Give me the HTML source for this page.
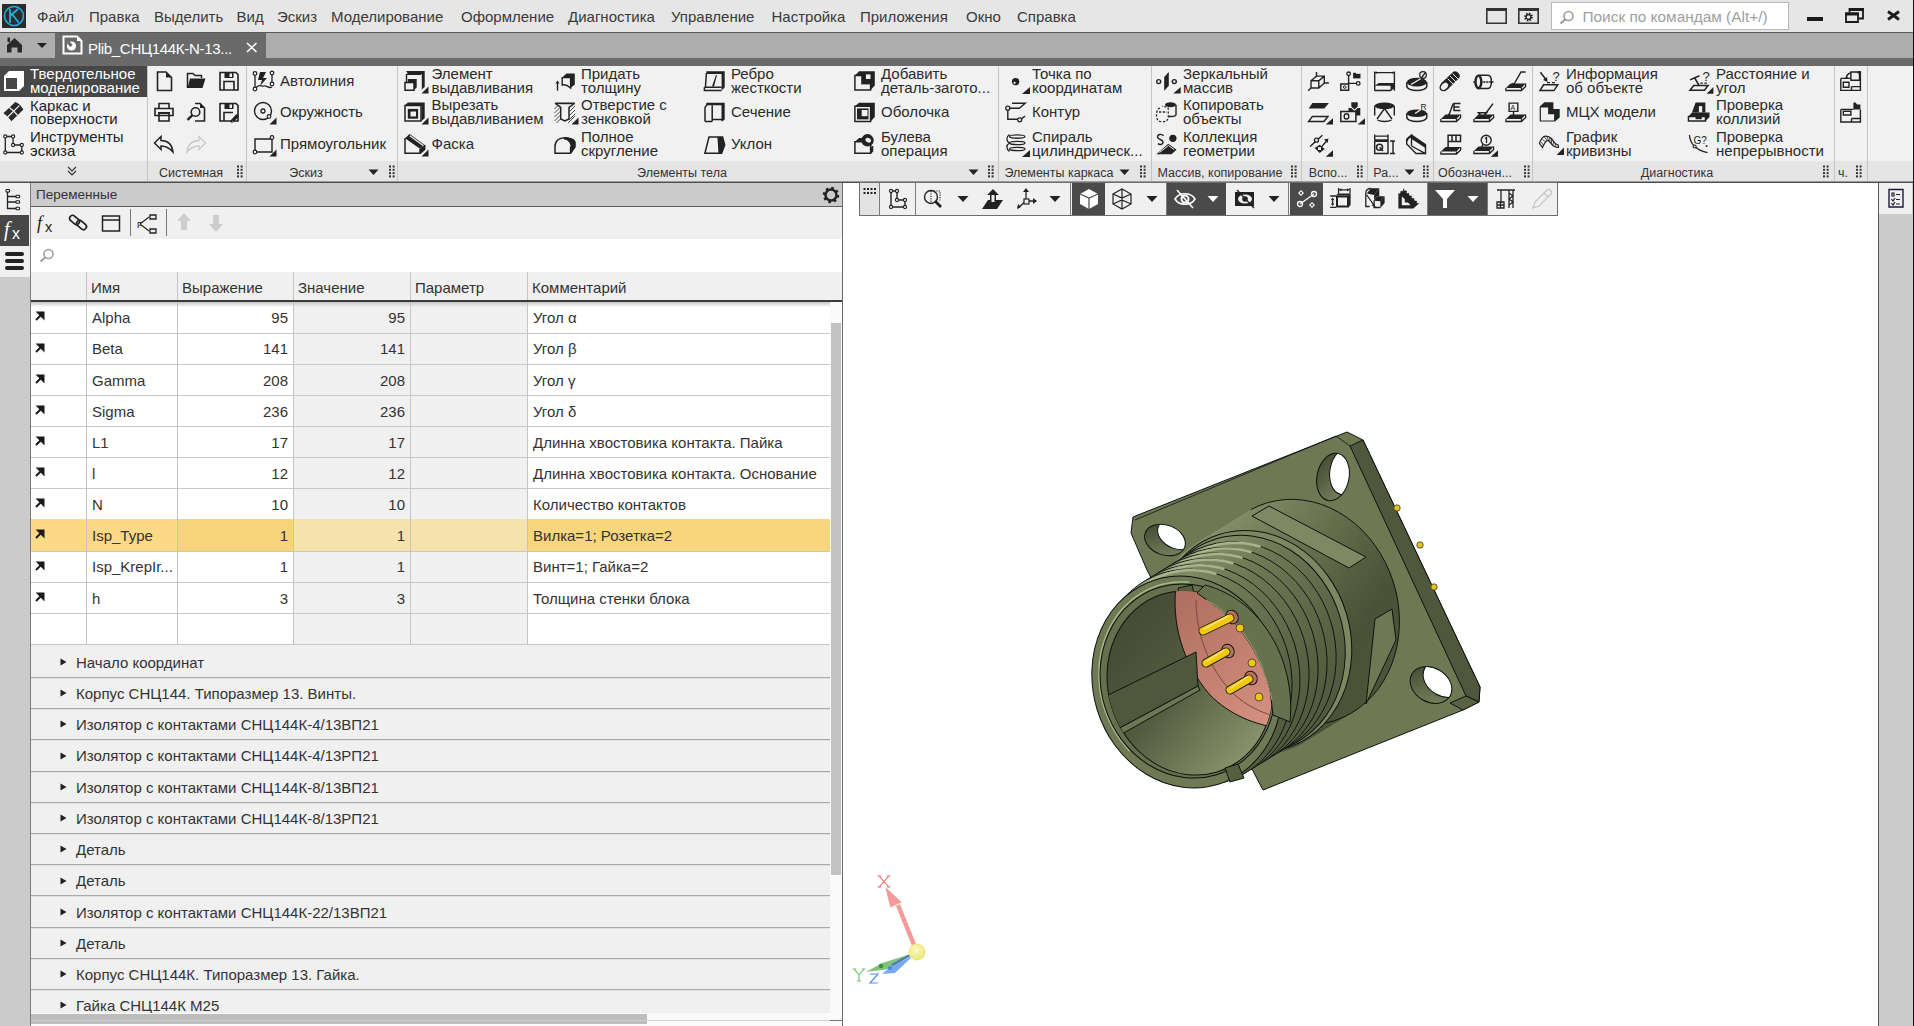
<!DOCTYPE html><html><head><meta charset="utf-8"><style>
html,body{margin:0;padding:0;width:1914px;height:1026px;overflow:hidden;background:#fff;}
.t{position:absolute;white-space:nowrap;font-family:"Liberation Sans", sans-serif;}
svg{overflow:visible}
</style></head><body>
<div style="position:absolute;left:0px;top:0px;width:1914px;height:32px;background:#e6e6e6;"></div>
<svg style="position:absolute;left:2px;top:4px;" width="24" height="24" viewBox="0 0 24 24"><rect x="0" y="0" width="24" height="24" fill="#2b2b2b"/><circle cx="12" cy="12" r="9.5" fill="none" stroke="#1ab0e8" stroke-width="1.6"/><path d="M8 5 V19 M8 12 L16 5 M10 10 L17 19" fill="none" stroke="#1ab0e8" stroke-width="1.8"/></svg>
<div class="t" style="left:37px;top:9.30px;font-size:15px;line-height:15px;color:#3a3a3a;">Файл</div>
<div class="t" style="left:89px;top:9.30px;font-size:15px;line-height:15px;color:#3a3a3a;">Правка</div>
<div class="t" style="left:154px;top:9.30px;font-size:15px;line-height:15px;color:#3a3a3a;">Выделить</div>
<div class="t" style="left:236.5px;top:9.30px;font-size:15px;line-height:15px;color:#3a3a3a;">Вид</div>
<div class="t" style="left:277px;top:9.30px;font-size:15px;line-height:15px;color:#3a3a3a;">Эскиз</div>
<div class="t" style="left:331px;top:9.30px;font-size:15px;line-height:15px;color:#3a3a3a;">Моделирование</div>
<div class="t" style="left:461px;top:9.30px;font-size:15px;line-height:15px;color:#3a3a3a;">Оформление</div>
<div class="t" style="left:568px;top:9.30px;font-size:15px;line-height:15px;color:#3a3a3a;">Диагностика</div>
<div class="t" style="left:671px;top:9.30px;font-size:15px;line-height:15px;color:#3a3a3a;">Управление</div>
<div class="t" style="left:771.5px;top:9.30px;font-size:15px;line-height:15px;color:#3a3a3a;">Настройка</div>
<div class="t" style="left:860px;top:9.30px;font-size:15px;line-height:15px;color:#3a3a3a;">Приложения</div>
<div class="t" style="left:966px;top:9.30px;font-size:15px;line-height:15px;color:#3a3a3a;">Окно</div>
<div class="t" style="left:1017px;top:9.30px;font-size:15px;line-height:15px;color:#3a3a3a;">Справка</div>
<svg style="position:absolute;left:1486px;top:8px;" width="21" height="16" viewBox="0 0 21 16"><path d="M0.8 0.8 H20.2 V15.2 H0.8 Z" fill="none" stroke="#333" stroke-width="1.6" /><path d="M0 0 H21 V3 H0 Z" fill="#333"/></svg>
<svg style="position:absolute;left:1518px;top:8px;" width="21" height="16" viewBox="0 0 21 16"><path d="M0.8 0.8 H20.2 V15.2 H0.8 Z" fill="none" stroke="#333" stroke-width="1.6" /><path d="M0 0 H21 V3 H0 Z" fill="#333"/><circle cx="10.5" cy="9" r="3.2" fill="none" stroke="#222" stroke-width="2.4" stroke-dasharray="1.4 1.1"/><circle cx="10.5" cy="9" r="2.4" fill="none" stroke="#222" stroke-width="1.2"/></svg>
<div style="position:absolute;left:1551px;top:2px;width:238px;height:28px;background:#fff;box-sizing:border-box;border:1px solid #b8b8b8;"></div>
<svg style="position:absolute;left:1559px;top:10px;" width="16" height="14" viewBox="0 0 16 14"><circle cx="9.5" cy="6" r="4.5" fill="none" stroke="#9a9a9a" stroke-width="1.6"/><path d="M6.2 9.5 L1.5 13.5" stroke="#9a9a9a" stroke-width="2.2"/></svg>
<div class="t" style="left:1582.5px;top:9.46px;font-size:15.4px;line-height:15.4px;color:#a0a0a0;">Поиск по командам (Alt+/)</div>
<div style="position:absolute;left:1807px;top:17px;width:16px;height:3.5px;background:#1a1a1a;"></div>
<svg style="position:absolute;left:1845px;top:8px;" width="19" height="15" viewBox="0 0 19 15"><path d="M1 5.5 H13 V14 H1 Z" fill="none" stroke="#1a1a1a" stroke-width="1.8" /><path d="M0 4.5 H14 V7.5 H0 Z" fill="#1a1a1a"/><path d="M4.5 4.5 V1 H18 V10.5 H13.5" fill="none" stroke="#1a1a1a" stroke-width="1.8" /><path d="M4 0 H19 V3 H4 Z" fill="#1a1a1a"/></svg>
<svg style="position:absolute;left:1886px;top:10px;" width="15" height="11" viewBox="0 0 15 11"><path d="M2 1.5 L13 9.5 M13 1.5 L2 9.5" stroke="#1a1a1a" stroke-width="2.8"/></svg>
<div style="position:absolute;left:0px;top:32px;width:1914px;height:34px;background:#6a6a6a;"></div>
<div style="position:absolute;left:0px;top:32px;width:1914px;height:1px;background:#5a5a5a;"></div>
<div style="position:absolute;left:0px;top:33px;width:55px;height:25px;background:#adadad;"></div>
<div style="position:absolute;left:266px;top:33px;width:1648px;height:25px;background:#adadad;"></div>
<svg style="position:absolute;left:6px;top:37px;" width="17" height="17" viewBox="0 0 17 17"><path d="M1 8 L8.5 1 L16 8 V15.5 H11.5 V10.5 H5.5 V15.5 H1 Z" fill="#2a2a2a"/><path d="M1.5 0.5 H4 V5 H1.5 Z" fill="#2a2a2a"/></svg>
<svg style="position:absolute;left:36px;top:42px;" width="12" height="8" viewBox="0 0 12 8"><path d="M1 1 L11 1 L6 6 Z" fill="#222"/></svg>
<svg style="position:absolute;left:62px;top:35px;" width="21" height="20" viewBox="0 0 21 20"><path d="M1.5 1.5 H15 L19.5 6 V18.5 H1.5 Z" fill="none" stroke="#fff" stroke-width="2" /><circle cx="9.5" cy="11" r="4.6" fill="#fff"/><path d="M9.5 11 L6.5 7.5" stroke="#6a6a6a" stroke-width="3"/><path d="M15 1.5 L19.5 6 H15 Z" fill="#fff"/></svg>
<div class="t" style="left:88px;top:41.30px;font-size:15px;line-height:15px;color:#ffffff;letter-spacing:-0.3px">Plib_СНЦ144К-N-13...</div>
<svg style="position:absolute;left:245.5px;top:42px;" width="12" height="11" viewBox="0 0 12 11"><path d="M1 1 L10.5 10 M10.5 1 L1 10" stroke="#fff" stroke-width="1.6"/></svg>
<div style="position:absolute;left:0px;top:66px;width:1914px;height:116px;background:#f1f1f1;"></div>
<div style="position:absolute;left:0px;top:161px;width:1914px;height:21px;background:#e5e5e5;"></div>
<div style="position:absolute;left:0px;top:181px;width:1914px;height:1px;background:#9a9a9a;"></div>
<div style="position:absolute;left:0px;top:182px;width:1914px;height:1px;background:#4e4e4e;"></div>
<div style="position:absolute;left:147px;top:66px;width:1px;height:115px;background:#c4c4c4;"></div>
<div style="position:absolute;left:246px;top:66px;width:1px;height:115px;background:#c4c4c4;"></div>
<div style="position:absolute;left:397px;top:66px;width:1px;height:115px;background:#c4c4c4;"></div>
<div style="position:absolute;left:998px;top:66px;width:1px;height:115px;background:#c4c4c4;"></div>
<div style="position:absolute;left:1151px;top:66px;width:1px;height:115px;background:#c4c4c4;"></div>
<div style="position:absolute;left:1301px;top:66px;width:1px;height:115px;background:#c4c4c4;"></div>
<div style="position:absolute;left:1367px;top:66px;width:1px;height:115px;background:#c4c4c4;"></div>
<div style="position:absolute;left:1433px;top:66px;width:1px;height:115px;background:#c4c4c4;"></div>
<div style="position:absolute;left:1532px;top:66px;width:1px;height:115px;background:#c4c4c4;"></div>
<div style="position:absolute;left:1834px;top:66px;width:1px;height:115px;background:#c4c4c4;"></div>
<div style="position:absolute;left:1867px;top:66px;width:1px;height:115px;background:#c4c4c4;"></div>
<div style="position:absolute;left:0px;top:66px;width:147px;height:31px;background:#474747;"></div>
<svg style="position:absolute;left:3px;top:70px;" width="22" height="22" viewBox="0 0 22 22"><path d="M1 6 L6 1 H21 V16 L16 21 H1 Z" fill="#ffffff"/><path d="M3 8 H14 V19 H3 Z" fill="#474747"/></svg>
<div class="t" style="left:30px;top:66.10px;font-size:15px;line-height:15px;color:#ffffff;">Твердотельное</div>
<div class="t" style="left:30px;top:79.70px;font-size:15px;line-height:15px;color:#ffffff;">моделирование</div>
<svg style="position:absolute;left:3px;top:101px;" width="22" height="22" viewBox="0 0 22 22"><path d="M0.4 12.2 L12.3 0.9 C15 2 18 4 20.4 8.4 L8.5 20.3 C6 17 3.5 14 0.4 12.2 Z" fill="#2a2a2a"/><path d="M6.3 6.5 C9 8.5 12 11 14.5 14.3 M16.3 4.6 L4.5 16.2" fill="none" stroke="#f1f1f1" stroke-width="1.3" /></svg>
<div class="t" style="left:30px;top:97.80px;font-size:15px;line-height:15px;color:#222;">Каркас и</div>
<div class="t" style="left:30px;top:111.10px;font-size:15px;line-height:15px;color:#222;">поверхности</div>
<svg style="position:absolute;left:3px;top:132px;" width="22" height="24" viewBox="0 0 22 24"><path d="M2.3 4.5 H10.1 V13 H18.8 V20.5 H2.3 Z" fill="none" stroke="#222" stroke-width="1.3" /><circle cx="2.3" cy="4.5" r="1.6" fill="#f1f1f1" stroke="#222" stroke-width="1.1"/><circle cx="10.1" cy="4.5" r="1.6" fill="#f1f1f1" stroke="#222" stroke-width="1.1"/><circle cx="10.1" cy="13" r="1.6" fill="#f1f1f1" stroke="#222" stroke-width="1.1"/><circle cx="18.8" cy="13" r="1.6" fill="#f1f1f1" stroke="#222" stroke-width="1.1"/><circle cx="18.8" cy="20.5" r="1.6" fill="#f1f1f1" stroke="#222" stroke-width="1.1"/><circle cx="2.3" cy="20.5" r="1.6" fill="#f1f1f1" stroke="#222" stroke-width="1.1"/></svg>
<div class="t" style="left:30px;top:129.30px;font-size:15px;line-height:15px;color:#222;">Инструменты</div>
<div class="t" style="left:30px;top:142.80px;font-size:15px;line-height:15px;color:#222;">эскиза</div>
<svg style="position:absolute;left:66px;top:165px;" width="12" height="12" viewBox="0 0 12 12"><path d="M2 2 L6 6 L10 2 M2 6 L6 10 L10 6" stroke="#333" stroke-width="1.2" fill="none"/></svg>
<div class="t" style="left:-109px;width:600px;text-align:center;top:166.92px;font-size:12.5px;line-height:12.5px;color:#333;">Системная</div>
<svg style="position:absolute;left:237px;top:165px;" width="6" height="12" viewBox="0 0 6 12"><rect x="0" y="0.5" width="2" height="2" fill="#333"/><rect x="0" y="3.8" width="2" height="2" fill="#333"/><rect x="0" y="7.1" width="2" height="2" fill="#333"/><rect x="0" y="10.4" width="2" height="2" fill="#333"/><rect x="3.6" y="0.5" width="2" height="2" fill="#333"/><rect x="3.6" y="3.8" width="2" height="2" fill="#333"/><rect x="3.6" y="7.1" width="2" height="2" fill="#333"/><rect x="3.6" y="10.4" width="2" height="2" fill="#333"/></svg>
<div class="t" style="left:6px;width:600px;text-align:center;top:166.92px;font-size:12.5px;line-height:12.5px;color:#333;">Эскиз</div>
<svg style="position:absolute;left:389px;top:165px;" width="6" height="12" viewBox="0 0 6 12"><rect x="0" y="0.5" width="2" height="2" fill="#333"/><rect x="0" y="3.8" width="2" height="2" fill="#333"/><rect x="0" y="7.1" width="2" height="2" fill="#333"/><rect x="0" y="10.4" width="2" height="2" fill="#333"/><rect x="3.6" y="0.5" width="2" height="2" fill="#333"/><rect x="3.6" y="3.8" width="2" height="2" fill="#333"/><rect x="3.6" y="7.1" width="2" height="2" fill="#333"/><rect x="3.6" y="10.4" width="2" height="2" fill="#333"/></svg>
<svg style="position:absolute;left:368px;top:168.5px;" width="11" height="7" viewBox="0 0 11 7"><path d="M0.5 0.5 L10.5 0.5 L5.5 6 Z" fill="#222"/></svg>
<div class="t" style="left:382px;width:600px;text-align:center;top:166.92px;font-size:12.5px;line-height:12.5px;color:#333;">Элементы тела</div>
<svg style="position:absolute;left:988px;top:165px;" width="6" height="12" viewBox="0 0 6 12"><rect x="0" y="0.5" width="2" height="2" fill="#333"/><rect x="0" y="3.8" width="2" height="2" fill="#333"/><rect x="0" y="7.1" width="2" height="2" fill="#333"/><rect x="0" y="10.4" width="2" height="2" fill="#333"/><rect x="3.6" y="0.5" width="2" height="2" fill="#333"/><rect x="3.6" y="3.8" width="2" height="2" fill="#333"/><rect x="3.6" y="7.1" width="2" height="2" fill="#333"/><rect x="3.6" y="10.4" width="2" height="2" fill="#333"/></svg>
<svg style="position:absolute;left:968px;top:168.5px;" width="11" height="7" viewBox="0 0 11 7"><path d="M0.5 0.5 L10.5 0.5 L5.5 6 Z" fill="#222"/></svg>
<div class="t" style="left:759px;width:600px;text-align:center;top:166.92px;font-size:12.5px;line-height:12.5px;color:#333;">Элементы каркаса</div>
<svg style="position:absolute;left:1140px;top:165px;" width="6" height="12" viewBox="0 0 6 12"><rect x="0" y="0.5" width="2" height="2" fill="#333"/><rect x="0" y="3.8" width="2" height="2" fill="#333"/><rect x="0" y="7.1" width="2" height="2" fill="#333"/><rect x="0" y="10.4" width="2" height="2" fill="#333"/><rect x="3.6" y="0.5" width="2" height="2" fill="#333"/><rect x="3.6" y="3.8" width="2" height="2" fill="#333"/><rect x="3.6" y="7.1" width="2" height="2" fill="#333"/><rect x="3.6" y="10.4" width="2" height="2" fill="#333"/></svg>
<svg style="position:absolute;left:1119px;top:168.5px;" width="11" height="7" viewBox="0 0 11 7"><path d="M0.5 0.5 L10.5 0.5 L5.5 6 Z" fill="#222"/></svg>
<div class="t" style="left:920px;width:600px;text-align:center;top:166.92px;font-size:12.5px;line-height:12.5px;color:#333;">Массив, копирование</div>
<svg style="position:absolute;left:1291px;top:165px;" width="6" height="12" viewBox="0 0 6 12"><rect x="0" y="0.5" width="2" height="2" fill="#333"/><rect x="0" y="3.8" width="2" height="2" fill="#333"/><rect x="0" y="7.1" width="2" height="2" fill="#333"/><rect x="0" y="10.4" width="2" height="2" fill="#333"/><rect x="3.6" y="0.5" width="2" height="2" fill="#333"/><rect x="3.6" y="3.8" width="2" height="2" fill="#333"/><rect x="3.6" y="7.1" width="2" height="2" fill="#333"/><rect x="3.6" y="10.4" width="2" height="2" fill="#333"/></svg>
<div class="t" style="left:1028px;width:600px;text-align:center;top:166.92px;font-size:12.5px;line-height:12.5px;color:#333;">Вспо...</div>
<svg style="position:absolute;left:1357px;top:165px;" width="6" height="12" viewBox="0 0 6 12"><rect x="0" y="0.5" width="2" height="2" fill="#333"/><rect x="0" y="3.8" width="2" height="2" fill="#333"/><rect x="0" y="7.1" width="2" height="2" fill="#333"/><rect x="0" y="10.4" width="2" height="2" fill="#333"/><rect x="3.6" y="0.5" width="2" height="2" fill="#333"/><rect x="3.6" y="3.8" width="2" height="2" fill="#333"/><rect x="3.6" y="7.1" width="2" height="2" fill="#333"/><rect x="3.6" y="10.4" width="2" height="2" fill="#333"/></svg>
<div class="t" style="left:1086px;width:600px;text-align:center;top:166.92px;font-size:12.5px;line-height:12.5px;color:#333;">Ра...</div>
<svg style="position:absolute;left:1423px;top:165px;" width="6" height="12" viewBox="0 0 6 12"><rect x="0" y="0.5" width="2" height="2" fill="#333"/><rect x="0" y="3.8" width="2" height="2" fill="#333"/><rect x="0" y="7.1" width="2" height="2" fill="#333"/><rect x="0" y="10.4" width="2" height="2" fill="#333"/><rect x="3.6" y="0.5" width="2" height="2" fill="#333"/><rect x="3.6" y="3.8" width="2" height="2" fill="#333"/><rect x="3.6" y="7.1" width="2" height="2" fill="#333"/><rect x="3.6" y="10.4" width="2" height="2" fill="#333"/></svg>
<svg style="position:absolute;left:1404px;top:168.5px;" width="11" height="7" viewBox="0 0 11 7"><path d="M0.5 0.5 L10.5 0.5 L5.5 6 Z" fill="#222"/></svg>
<div class="t" style="left:1175px;width:600px;text-align:center;top:166.92px;font-size:12.5px;line-height:12.5px;color:#333;">Обозначен...</div>
<svg style="position:absolute;left:1524px;top:165px;" width="6" height="12" viewBox="0 0 6 12"><rect x="0" y="0.5" width="2" height="2" fill="#333"/><rect x="0" y="3.8" width="2" height="2" fill="#333"/><rect x="0" y="7.1" width="2" height="2" fill="#333"/><rect x="0" y="10.4" width="2" height="2" fill="#333"/><rect x="3.6" y="0.5" width="2" height="2" fill="#333"/><rect x="3.6" y="3.8" width="2" height="2" fill="#333"/><rect x="3.6" y="7.1" width="2" height="2" fill="#333"/><rect x="3.6" y="10.4" width="2" height="2" fill="#333"/></svg>
<div class="t" style="left:1377px;width:600px;text-align:center;top:166.92px;font-size:12.5px;line-height:12.5px;color:#333;">Диагностика</div>
<svg style="position:absolute;left:1823px;top:165px;" width="6" height="12" viewBox="0 0 6 12"><rect x="0" y="0.5" width="2" height="2" fill="#333"/><rect x="0" y="3.8" width="2" height="2" fill="#333"/><rect x="0" y="7.1" width="2" height="2" fill="#333"/><rect x="0" y="10.4" width="2" height="2" fill="#333"/><rect x="3.6" y="0.5" width="2" height="2" fill="#333"/><rect x="3.6" y="3.8" width="2" height="2" fill="#333"/><rect x="3.6" y="7.1" width="2" height="2" fill="#333"/><rect x="3.6" y="10.4" width="2" height="2" fill="#333"/></svg>
<div class="t" style="left:1543px;width:600px;text-align:center;top:166.92px;font-size:12.5px;line-height:12.5px;color:#333;">ч.</div>
<svg style="position:absolute;left:1856px;top:165px;" width="6" height="12" viewBox="0 0 6 12"><rect x="0" y="0.5" width="2" height="2" fill="#333"/><rect x="0" y="3.8" width="2" height="2" fill="#333"/><rect x="0" y="7.1" width="2" height="2" fill="#333"/><rect x="0" y="10.4" width="2" height="2" fill="#333"/><rect x="3.6" y="0.5" width="2" height="2" fill="#333"/><rect x="3.6" y="3.8" width="2" height="2" fill="#333"/><rect x="3.6" y="7.1" width="2" height="2" fill="#333"/><rect x="3.6" y="10.4" width="2" height="2" fill="#333"/></svg>
<svg style="position:absolute;left:152px;top:69px;" width="24" height="24" viewBox="0 0 24 24"><path d="M5.5 3 H14 L19.5 8.5 V21.5 H5.5 Z" fill="none" stroke="#222" stroke-width="1.6" /><path d="M14 3 L19.5 8.5 H14 Z" fill="#222"/></svg>
<svg style="position:absolute;left:184px;top:69px;" width="24" height="24" viewBox="0 0 24 24"><path d="M3.5 19 V4.5 H9 L11 6.5 H17.5 V9" fill="none" stroke="#222" stroke-width="1.5" /><path d="M3.5 19 L6 9.5 H21.5 L18.5 19 Z" fill="#222"/></svg>
<svg style="position:absolute;left:217px;top:69px;" width="24" height="24" viewBox="0 0 24 24"><path d="M3 3.5 H19 L21 5.5 V21 H3 Z M7 21 V12.5 H17 V21" fill="none" stroke="#222" stroke-width="1.6" /><path d="M7.5 3.5 H16.5 V9 H7.5 Z" fill="#222"/><rect x="12.5" y="4.5" width="2.5" height="3.5" fill="#f1f1f1"/></svg>
<svg style="position:absolute;left:152px;top:100px;" width="24" height="24" viewBox="0 0 24 24"><path d="M7 3.5 H17 V8.5 H7 Z M3 8.5 H21 V15.5 H3 Z M7 13 H17 V21 H7 Z" fill="none" stroke="#222" stroke-width="1.6" /><path d="M6 12 H18 V14 H6 Z" fill="#222"/></svg>
<svg style="position:absolute;left:184px;top:100px;" width="24" height="24" viewBox="0 0 24 24"><path d="M11 3.5 H16 L20.5 8 V21 H11" fill="none" stroke="#222" stroke-width="1.6" /><path d="M16 3.5 L20.5 8 H16 Z" fill="#222"/><circle cx="11.5" cy="12" r="4.3" fill="#f1f1f1" stroke="#222" stroke-width="1.6"/><path d="M8.5 15 L3.5 20" fill="none" stroke="#222" stroke-width="2.4" /></svg>
<svg style="position:absolute;left:217px;top:100px;" width="24" height="24" viewBox="0 0 24 24"><path d="M3 3.5 H19 L21 5.5 V21 H3 Z M7 21 V12.5 H16" fill="none" stroke="#222" stroke-width="1.6" /><path d="M7.5 3.5 H16.5 V9 H7.5 Z" fill="#222"/><rect x="12.5" y="4.5" width="2.5" height="3.5" fill="#f1f1f1"/><path d="M13.5 20.5 L19.5 14 L22 16.5 L16 22.5 H13.5 Z" fill="#222"/><path d="M15 20.5 L16 21.5 L15 21.5 Z" fill="#f1f1f1"/></svg>
<svg style="position:absolute;left:152px;top:132px;" width="24" height="24" viewBox="0 0 24 24"><path d="M2.5 11 L9 4.5 V8.5 C15 8.5 20 12 21 20 C17 15.5 13.5 14 9 14 V17.5 Z" fill="none" stroke="#222" stroke-width="1.5" /></svg>
<svg style="position:absolute;left:184px;top:132px;" width="24" height="24" viewBox="0 0 24 24"><path d="M21.5 11 L15 4.5 V8.5 C9 8.5 4 12 3 20 C7 15.5 10.5 14 15 14 V17.5 Z" fill="none" stroke="#c9c9c9" stroke-width="1.3" /></svg>
<svg style="position:absolute;left:252px;top:69px;" width="24" height="24" viewBox="0 0 24 24"><path d="M3 5 V20 M3 20 C7 14 9 18 12 17 C15 16 16 20 20 18 M20 5 V15" fill="none" stroke="#222" stroke-width="1.3" /><path d="M8 3 H14 L11 9 H15 L8 17 L10 11 H6 Z" fill="#222"/><circle cx="3" cy="4.5" r="1.8" fill="#f1f1f1" stroke="#222" stroke-width="1.2"/><circle cx="20" cy="4" r="1.8" fill="#f1f1f1" stroke="#222" stroke-width="1.2"/><circle cx="20" cy="15" r="1.8" fill="#f1f1f1" stroke="#222" stroke-width="1.2"/><circle cx="3" cy="20" r="1.8" fill="#f1f1f1" stroke="#222" stroke-width="1.2"/></svg>
<div class="t" style="left:280px;top:73.10px;font-size:15px;line-height:15px;color:#2a2a2a;">Автолиния</div>
<svg style="position:absolute;left:252px;top:100px;" width="24" height="24" viewBox="0 0 24 24"><circle cx="11" cy="11" r="8.5" fill="none" stroke="#222" stroke-width="1.4"/><circle cx="11" cy="11" r="2" fill="none" stroke="#222" stroke-width="1.3"/><circle cx="17" cy="16.5" r="1.8" fill="#f1f1f1" stroke="#222" stroke-width="1.2"/><path d="M17.5 24.5 L24.5 17.5 V24.5 Z" fill="#222"/></svg>
<div class="t" style="left:280px;top:104.10px;font-size:15px;line-height:15px;color:#2a2a2a;">Окружность</div>
<svg style="position:absolute;left:252px;top:132px;" width="24" height="24" viewBox="0 0 24 24"><path d="M3 7 H20 V20 H3 Z" fill="none" stroke="#222" stroke-width="1.4" /><circle cx="20" cy="5.5" r="1.8" fill="#f1f1f1" stroke="#222" stroke-width="1.2"/><circle cx="3" cy="20" r="1.8" fill="#f1f1f1" stroke="#222" stroke-width="1.2"/><path d="M17.5 24.5 L24.5 17.5 V24.5 Z" fill="#222"/></svg>
<div class="t" style="left:280px;top:136.10px;font-size:15px;line-height:15px;color:#2a2a2a;">Прямоугольник</div>
<svg style="position:absolute;left:404px;top:69px;" width="24" height="24" viewBox="0 0 24 24"><path d="M2.5 13 V5 M2.5 5.2 H17" fill="none" stroke="#222" stroke-width="1.4" /><path d="M2 2 H20.7 V18 L17.8 20.5 V5.3 H4.5 Z" fill="#222"/><path d="M3.8 10 H12.7 V18.5 L10 21 V13.2 H3.8 Z" fill="#222"/><path d="M1 13.5 H10 V21.2 H1 Z" fill="none" stroke="#222" stroke-width="1.5" /><path d="M17.5 24.5 L24.5 17.5 V24.5 Z" fill="#222"/></svg>
<div class="t" style="left:431.5px;top:66.00px;font-size:15px;line-height:15px;color:#2a2a2a;">Элемент</div>
<div class="t" style="left:431.5px;top:80.10px;font-size:15px;line-height:15px;color:#2a2a2a;">выдавливания</div>
<svg style="position:absolute;left:404px;top:100px;" width="24" height="24" viewBox="0 0 24 24"><path d="M1 5.2 L3.8 2.4 H20.7 V18.3 L17.5 21 V5.2 Z" fill="#222"/><path d="M1 5.5 H17 V21 H1 Z" fill="none" stroke="#222" stroke-width="1.5" /><path d="M3.8 8.9 H14.1 V18.7 H3.8 Z" fill="#222"/><path d="M6.5 11.5 H12 V16.5 H6.5 Z" fill="#f1f1f1"/><path d="M6.5 11.5 L8 10.3 H13.2 V15.3 L12 16.5" fill="none" stroke="#222" stroke-width="1" /><path d="M17.5 24.5 L24.5 17.5 V24.5 Z" fill="#222"/></svg>
<div class="t" style="left:431.5px;top:97.00px;font-size:15px;line-height:15px;color:#2a2a2a;">Вырезать</div>
<div class="t" style="left:431.5px;top:111.10px;font-size:15px;line-height:15px;color:#2a2a2a;">выдавливанием</div>
<svg style="position:absolute;left:404px;top:132px;" width="24" height="24" viewBox="0 0 24 24"><path d="M1 6 V21.3 H16 V16.7 M16 21.3 L20.7 17.5 V13" fill="none" stroke="#222" stroke-width="1.5" /><path d="M1 6.2 L5.6 2 L20.7 13 L16 16.8 Z" fill="#222"/><path d="M16 16.8 L20.7 13 V17.5 L16 21.3 Z" fill="#222"/><path d="M5.8 3.8 L19.5 13.8" fill="none" stroke="#f1f1f1" stroke-width="1.2" /><path d="M17.5 24.5 L24.5 17.5 V24.5 Z" fill="#222"/></svg>
<div class="t" style="left:431.5px;top:136.10px;font-size:15px;line-height:15px;color:#2a2a2a;">Фаска</div>
<svg style="position:absolute;left:554px;top:69px;" width="24" height="24" viewBox="0 0 24 24"><path d="M8.2 8.6 L12.4 4.4 H20.8 V15.4 L16.6 19 V8.6 Z" fill="#222"/><path d="M8.2 8.6 H16.6 V19 Q12 15 8.2 16 Z" fill="none" stroke="#222" stroke-width="1.4" /><path d="M3.5 21.6 V13.5" fill="none" stroke="#222" stroke-width="1.4" /><path d="M1.5 14.5 L3.5 11.5 L5.5 14.5 Z" fill="#222"/></svg>
<div class="t" style="left:581px;top:66.00px;font-size:15px;line-height:15px;color:#2a2a2a;">Придать</div>
<div class="t" style="left:581px;top:80.10px;font-size:15px;line-height:15px;color:#2a2a2a;">толщину</div>
<svg style="position:absolute;left:554px;top:100px;" width="24" height="24" viewBox="0 0 24 24"><path d="M0.9 2.5 H20.8 V4.2 H0.9 Z" fill="#222"/><path d="M1.5 3.5 L6.7 7.4 V19 L10.8 21 L15 19 V7.4 L20.3 3.5" fill="none" stroke="#222" stroke-width="1.5" /><path d="M0.5 9 L4.5 5 M0.5 13 L6 7.5 M0.5 17 L6 11.5 M0.5 21 L6 15.5 M2.5 23 L6.5 19 M15.5 11.5 L21 6 M15.5 15.5 L21 10 M15.5 19.5 L21 14 M14 23 L21 16" fill="none" stroke="#222" stroke-width="0.8" /><path d="M17.5 24.5 L24.5 17.5 V24.5 Z" fill="#222"/></svg>
<div class="t" style="left:581px;top:97.00px;font-size:15px;line-height:15px;color:#2a2a2a;">Отверстие с</div>
<div class="t" style="left:581px;top:111.10px;font-size:15px;line-height:15px;color:#2a2a2a;">зенковкой</div>
<svg style="position:absolute;left:554px;top:132px;" width="24" height="24" viewBox="0 0 24 24"><path d="M1 21.3 V14.5 C1 9 5 5.7 10.5 5.7 C16 5.7 20.8 8 20.8 10.4 V15 L16.6 21.3 Z M16.6 21.3 V14.5" fill="none" stroke="#222" stroke-width="1.5" /><path d="M10 5 C15.5 5 21.5 7.5 21.5 10.4 V15.2 L16.6 21.3 V14.5 C16.6 11 13.5 7.5 10 7.5 Z" fill="#222"/></svg>
<div class="t" style="left:581px;top:129.00px;font-size:15px;line-height:15px;color:#2a2a2a;">Полное</div>
<div class="t" style="left:581px;top:143.10px;font-size:15px;line-height:15px;color:#2a2a2a;">скругление</div>
<svg style="position:absolute;left:703px;top:69px;" width="24" height="24" viewBox="0 0 24 24"><path d="M3.4 2.3 H21.7 V18.6 L18.6 21.6 V4.9 H3.4 Z" fill="#222"/><path d="M3.4 4 L2.4 19 M1.4 18.3 H18.6 M1.4 18.3 V21.6 H18.6" fill="none" stroke="#222" stroke-width="1.5" /><path d="M13 6 H14 L11 17.5 H9 Z" fill="#222"/></svg>
<div class="t" style="left:731px;top:66.00px;font-size:15px;line-height:15px;color:#2a2a2a;">Ребро</div>
<div class="t" style="left:731px;top:80.10px;font-size:15px;line-height:15px;color:#2a2a2a;">жесткости</div>
<svg style="position:absolute;left:703px;top:100px;" width="24" height="24" viewBox="0 0 24 24"><path d="M2 21.5 V7.4 L4.5 4 M9.2 5.3 V21.5 M2 21.5 H9.2 M9.2 19.4 H20.7" fill="none" stroke="#222" stroke-width="1.5" /><path d="M3.4 2.7 H21.7 V19.4 L19 21.5 H18.5 V5.3 H3.4 Z" fill="#222"/></svg>
<div class="t" style="left:731px;top:104.10px;font-size:15px;line-height:15px;color:#2a2a2a;">Сечение</div>
<svg style="position:absolute;left:703px;top:132px;" width="24" height="24" viewBox="0 0 24 24"><path d="M1.9 21.3 L6 5.1 H19.6 L21.7 13 L18.6 21.3 Z" fill="none" stroke="#222" stroke-width="1.5" /><path d="M14.4 5.1 H19.6 L21.7 13 L18.6 21.3 H15.5 Z" fill="#222"/></svg>
<div class="t" style="left:731px;top:136.10px;font-size:15px;line-height:15px;color:#2a2a2a;">Уклон</div>
<svg style="position:absolute;left:853px;top:69px;" width="24" height="24" viewBox="0 0 24 24"><path d="M1.9 6.5 L6.1 2.3 H21.8 V16.4 L17.6 21.1 V6.5 Z" fill="#222"/><path d="M1.9 6.5 H17.6 V21.1 H1.9 Z" fill="none" stroke="#222" stroke-width="1.5" /><path d="M8.2 6.5 H17.6 V15.4 H8.2 Z" fill="#222"/><rect x="12.4" y="4.9" width="5.6" height="5.6" fill="#f1f1f1" stroke="#222" stroke-width="1"/></svg>
<div class="t" style="left:881px;top:66.00px;font-size:15px;line-height:15px;color:#2a2a2a;">Добавить</div>
<div class="t" style="left:881px;top:80.10px;font-size:15px;line-height:15px;color:#2a2a2a;">деталь-загото...</div>
<svg style="position:absolute;left:853px;top:100px;" width="24" height="24" viewBox="0 0 24 24"><path d="M1.9 6.3 L6.1 2.7 H21.8 V17 L17.6 21.5 V6.3 Z" fill="#222"/><path d="M1.9 6.3 H17.6 V21.5 H1.9 Z" fill="none" stroke="#222" stroke-width="1.5" /><path d="M4 8.4 H15.5 V19.4 H4 Z" fill="#222"/><path d="M8.7 10 H14.5 V16.2 H8.7 Z" fill="#f1f1f1"/></svg>
<div class="t" style="left:881px;top:104.10px;font-size:15px;line-height:15px;color:#2a2a2a;">Оболочка</div>
<svg style="position:absolute;left:853px;top:132px;" width="24" height="24" viewBox="0 0 24 24"><path d="M1.9 9.8 H17.6 V21.3 H1.9 Z M17.6 21.3 L19.5 19 V14" fill="none" stroke="#222" stroke-width="1.5" /><path d="M1.9 9.8 L6 6 H11 L10 9.8 Z" fill="#222"/><path d="M17.6 16 L19.5 14 V19 L17.6 21.3 Z" fill="#222"/><circle cx="14.5" cy="8.3" r="6.2" fill="#222"/><ellipse cx="15.2" cy="8.2" rx="2.9" ry="2.2" transform="rotate(30 15.2 8.2)" fill="#f1f1f1"/></svg>
<div class="t" style="left:881px;top:129.00px;font-size:15px;line-height:15px;color:#2a2a2a;">Булева</div>
<div class="t" style="left:881px;top:143.10px;font-size:15px;line-height:15px;color:#2a2a2a;">операция</div>
<svg style="position:absolute;left:1004px;top:69px;" width="24" height="24" viewBox="0 0 24 24"><circle cx="11.6" cy="12.6" r="3.7" fill="#222"/><circle cx="10.6" cy="13.8" r="1.1" fill="#f1f1f1"/><path d="M18 25 L26 18 V25 Z" fill="#222"/></svg>
<div class="t" style="left:1032px;top:66.00px;font-size:15px;line-height:15px;color:#2a2a2a;">Точка по</div>
<div class="t" style="left:1032px;top:80.10px;font-size:15px;line-height:15px;color:#2a2a2a;">координатам</div>
<svg style="position:absolute;left:1004px;top:100px;" width="24" height="24" viewBox="0 0 24 24"><path d="M3.8 8.2 H15.3 L21.2 3.2 H8 M3.8 8.2 V19.2 H15.7 M15.7 20.1 L21.2 16" fill="none" stroke="#222" stroke-width="1.4" /><circle cx="3.8" cy="8.2" r="2" fill="#f1f1f1" stroke="#222" stroke-width="1.3"/><circle cx="15.7" cy="19.8" r="2" fill="#f1f1f1" stroke="#222" stroke-width="1.3"/></svg>
<div class="t" style="left:1032px;top:104.10px;font-size:15px;line-height:15px;color:#2a2a2a;">Контур</div>
<svg style="position:absolute;left:1004px;top:132px;" width="24" height="24" viewBox="0 0 24 24"><path d="M5.5 4.6 C5.5 2.4 21 2.4 21 4.6 C21 6.8 5.5 6.8 5.5 4.6 M5.5 11 C5.5 8.8 21 8.8 21 11 C21 13.2 5.5 13.2 5.5 11 M5.5 17 C5.5 14.8 21 14.8 21 17 C21 19.2 5.5 19.2 5.5 17 M5.5 2.5 C2 5 2 9 5.5 11 C2 13 2 17 5.5 19.5" fill="none" stroke="#222" stroke-width="1.3" /><path d="M18 25 L26 18 V25 Z" fill="#222"/></svg>
<div class="t" style="left:1032px;top:129.00px;font-size:15px;line-height:15px;color:#2a2a2a;">Спираль</div>
<div class="t" style="left:1032px;top:143.10px;font-size:15px;line-height:15px;color:#2a2a2a;">цилиндрическ...</div>
<svg style="position:absolute;left:1155px;top:69px;" width="24" height="24" viewBox="0 0 24 24"><path d="M9.2 8 L13.8 3 V16.7 L9.2 21.7 Z" fill="#222"/><circle cx="3.7" cy="12.6" r="2" fill="#f1f1f1" stroke="#222" stroke-width="1.4"/><circle cx="19.3" cy="12.6" r="2" fill="#f1f1f1" stroke="#222" stroke-width="1.4"/><path d="M18.3 24.5 L25.7 18 V24.5 Z" fill="#222"/></svg>
<div class="t" style="left:1183px;top:66.00px;font-size:15px;line-height:15px;color:#2a2a2a;">Зеркальный</div>
<div class="t" style="left:1183px;top:80.10px;font-size:15px;line-height:15px;color:#2a2a2a;">массив</div>
<svg style="position:absolute;left:1155px;top:100px;" width="24" height="24" viewBox="0 0 24 24"><path d="M5 8 C2 9 1.5 13 1.5 16 C1.5 20 4 21.8 7.5 21.8 C11 21.8 13.3 20 13.3 17 V9 C13.3 7 10 6.3 7 6.5 M4 12 H12" fill="none" stroke="#222" stroke-width="1.3" stroke-dasharray="2.2 1.6"/><ellipse cx="15.5" cy="4.7" rx="5.5" ry="2.5" fill="#222"/><path d="M21 4.7 V14.5 C21 16 19 16.5 16 16.5 H13.3" fill="none" stroke="#222" stroke-width="1.4" /></svg>
<div class="t" style="left:1183px;top:97.00px;font-size:15px;line-height:15px;color:#2a2a2a;">Копировать</div>
<div class="t" style="left:1183px;top:111.10px;font-size:15px;line-height:15px;color:#2a2a2a;">объекты</div>
<svg style="position:absolute;left:1155px;top:132px;" width="24" height="24" viewBox="0 0 24 24"><path d="M8.5 4 C7 1.5 2.5 2 2.5 5 C2.5 8 8 7 8 10 C8 13 4 13 3 11.5" fill="none" stroke="#222" stroke-width="1.4" /><circle cx="17.9" cy="6.3" r="3.6" fill="#222"/><path d="M1.4 22.3 L13.3 11.8 L21.5 17.8 L16.5 22.3 Z" fill="#222"/><path d="M4.5 20.5 L13.5 13.5 L19 17.5" fill="none" stroke="#f1f1f1" stroke-width="1" /></svg>
<div class="t" style="left:1183px;top:129.00px;font-size:15px;line-height:15px;color:#2a2a2a;">Коллекция</div>
<div class="t" style="left:1183px;top:143.10px;font-size:15px;line-height:15px;color:#2a2a2a;">геометрии</div>
<svg style="position:absolute;left:1307px;top:69px;" width="24" height="24" viewBox="0 0 24 24"><path d="M9.5 3 V7.1 M4 11.7 L9.5 7.1 H17.3 V14 L11.8 19 H4 Z M4 11.7 H11.8 L17.3 7.1 M11.8 11.7 V19 M1.2 21.7 L4 19 M17.3 14 H21.9" fill="none" stroke="#222" stroke-width="1.4" /></svg>
<svg style="position:absolute;left:1339px;top:69px;" width="24" height="24" viewBox="0 0 24 24"><path d="M9.6 6.2 V14.9 M9.6 14.4 H17.4" fill="none" stroke="#222" stroke-width="1.4" /><path d="M14.1 4.8 H21.5 V9.4 H14.1 Z" fill="#222"/><path d="M14.1 3.8 H17 V5 H14.1Z" fill="#222"/><circle cx="9.6" cy="4.8" r="1.8" fill="#f1f1f1" stroke="#222" stroke-width="1.3"/><circle cx="19.2" cy="14.4" r="1.8" fill="#f1f1f1" stroke="#222" stroke-width="1.3"/><path d="M1.8 14.9 H9.6 V21.3 H1.8 Z" fill="none" stroke="#222" stroke-width="1.5" /><circle cx="5.7" cy="18.1" r="1.3" fill="none" stroke="#222" stroke-width="1"/></svg>
<svg style="position:absolute;left:1307px;top:100px;" width="24" height="24" viewBox="0 0 24 24"><path d="M1.7 8.6 L5.4 3.1 H21.9 L17.3 8.6 Z" fill="#222"/><path d="M1.7 21.4 L5.4 16.4 H20.9 L17 21.4 Z" fill="none" stroke="#222" stroke-width="1.5" /><path d="M18.7 24.6 L26 18.2 V24.6 Z" fill="#222"/></svg>
<svg style="position:absolute;left:1339px;top:100px;" width="24" height="24" viewBox="0 0 24 24"><path d="M1.8 11.4 H16.9 V21.4 H1.8 Z" fill="none" stroke="#222" stroke-width="1.5" /><ellipse cx="7.5" cy="16.4" rx="2.3" ry="2.6" fill="none" stroke="#222" stroke-width="1.4"/><path d="M9.5 11.4 V8 H12.3 L15.5 11 L18.7 8 H21.3 V15.5 H16.9 V11.4 Z" fill="#222"/><path d="M12.3 2.2 H18.7 V6.5 L15.5 9.5 L12.3 6.5 Z" fill="#222"/><path d="M18.7 24.6 L26 18.2 V24.6 Z" fill="#222"/></svg>
<svg style="position:absolute;left:1307px;top:132px;" width="24" height="24" viewBox="0 0 24 24"><path d="M3.1 14.6 L15.4 3.2 M12.7 16.9 L20.5 8" fill="none" stroke="#222" stroke-width="1.4" /><path d="M21.5 6.5 L17 7.5 L20.5 11 Z" fill="#222"/><circle cx="9.5" cy="8.2" r="2" fill="#f1f1f1" stroke="#222" stroke-width="1.3"/><path d="M7.7 16 L12.7 12.8 L17.7 16.9 L12.7 21 Z" fill="#222"/><rect x="11" y="15.2" width="3" height="2.8" fill="#f1f1f1"/><path d="M18.7 24.7 L26 18.3 V24.7 Z" fill="#222"/></svg>
<svg style="position:absolute;left:1373px;top:69px;" width="24" height="24" viewBox="0 0 24 24"><path d="M1.7 2.5 V21.7 M21.4 2.5 V21.7 M1.7 3.6 H21.4 M1.7 21.5 H17.5 L21.4 18" fill="none" stroke="#222" stroke-width="1.4" /><path d="M1.7 16.7 L5.8 13.9 H21.4 V17.5 L17.5 21 V16.7 Z" fill="#222"/><path d="M1.7 3.6 L4 2.5 V4.7 Z M21.4 3.6 L19 2.5 V4.7Z" fill="#222"/></svg>
<svg style="position:absolute;left:1405px;top:69px;" width="24" height="24" viewBox="0 0 24 24"><ellipse cx="11.8" cy="13.2" rx="10" ry="4.4" fill="#222"/><path d="M1.8 13.2 V17 C1.8 23 21.8 23 21.8 17 V13.2" fill="none" stroke="#222" stroke-width="1.5" /><path d="M6 15.5 L16 9.5" fill="none" stroke="#f1f1f1" stroke-width="1.3" /><path d="M16 9.5 L20 4" fill="none" stroke="#222" stroke-width="1.3" /><circle cx="18" cy="6" r="3.3" fill="none" stroke="#222" stroke-width="1.3"/></svg>
<svg style="position:absolute;left:1373px;top:100px;" width="24" height="24" viewBox="0 0 24 24"><ellipse cx="11.5" cy="5.8" rx="9.8" ry="3.3" fill="#222"/><path d="M1.7 5.8 V15.5 M21.3 5.8 V15.5 M4 19 L11.5 8.5 L19 19 M4.5 20 C8 22 15 22 18.5 20" fill="none" stroke="#222" stroke-width="1.4" /><path d="M6 4.5 H17" fill="none" stroke="#f1f1f1" stroke-width="0" /></svg>
<svg style="position:absolute;left:1405px;top:100px;" width="24" height="24" viewBox="0 0 24 24"><ellipse cx="11.8" cy="13.2" rx="10" ry="3.8" fill="#222"/><path d="M1.8 13.2 V17 C1.8 23 21.8 23 21.8 17 V13.2" fill="none" stroke="#222" stroke-width="1.5" /><path d="M10 13.5 L16 9.5" fill="none" stroke="#f1f1f1" stroke-width="1.3" /><text x="15.5" y="9.5" font-size="8.5" font-family="Liberation Sans" fill="#222">R</text></svg>
<svg style="position:absolute;left:1373px;top:132px;" width="24" height="24" viewBox="0 0 24 24"><path d="M1.7 9.1 H15 V21.5 H1.7 Z M2.5 4.1 H14.5 M1.7 2.5 V8 M15 2.5 V21.5 M20 9 V21 M17 9 H22 M17 21.5 H22" fill="none" stroke="#222" stroke-width="1.4" /><path d="M1.7 7.3 H15 V10 H1.7 Z" fill="#222"/><circle cx="6.5" cy="15.3" r="3" fill="none" stroke="#222" stroke-width="1.6"/><path d="M6.5 15.3 L10 19" fill="none" stroke="#222" stroke-width="1.4" /></svg>
<svg style="position:absolute;left:1405px;top:132px;" width="24" height="24" viewBox="0 0 24 24"><path d="M1.7 7 L6.5 3 V14 M6.5 3 L20.5 12.5 V21.5 L6.5 14 M1.7 7 V12 L11 21.5 H20.5 M2 9 C3 5 6 4.5 8 5.5" fill="none" stroke="#222" stroke-width="1.4" /><path d="M6.5 3 L20.5 12.5 V16 L6.5 7 Z" fill="#222"/></svg>
<svg style="position:absolute;left:1439px;top:69px;" width="24" height="24" viewBox="0 0 24 24"><path d="M2 14.5 L14 3 C16.5 0.5 22.5 5.5 20.5 8.5 L9 20 Z" fill="#222"/><path d="M8.5 9.5 L14.5 15.5 M11 7 L17 13 M13.5 4.5 L19 10" fill="none" stroke="#f1f1f1" stroke-width="1" /><ellipse cx="5.5" cy="17.3" rx="3.6" ry="4.8" transform="rotate(45 5.5 17.3)" fill="#f1f1f1" stroke="#222" stroke-width="1.5"/></svg>
<svg style="position:absolute;left:1472px;top:69px;" width="24" height="24" viewBox="0 0 24 24"><path d="M6.4 6.2 H16 C20.5 6.2 20.5 19.5 16 19.5 H6.4 M1.3 13 H21.5" fill="none" stroke="#222" stroke-width="1.5" /><path d="M10 13 H18" fill="none" stroke="#f1f1f1" stroke-width="1.2" stroke-dasharray="1.5 1.5"/><ellipse cx="6.4" cy="12.9" rx="2.9" ry="6.3" fill="#f1f1f1" stroke="#222" stroke-width="2.4"/></svg>
<svg style="position:absolute;left:1504px;top:69px;" width="24" height="24" viewBox="0 0 24 24"><path d="M1.9 19.0 L6.5 14.5 H21.6 L17.5 19.0 Z" fill="#222"/><path d="M1.9 19.0 V21.5 H17.5 L21.6 17.5 V14.5 M17.5 19.0 V21.5" fill="none" stroke="#222" stroke-width="1.3" /><path d="M8.7 17.5 L17 3 H21.6" fill="none" stroke="#222" stroke-width="1.4" /><path d="M8 18.5 L8.5 13.5 L11.5 15.5 Z" fill="#222"/></svg>
<svg style="position:absolute;left:1439px;top:100px;" width="24" height="24" viewBox="0 0 24 24"><path d="M1.9 19.0 L6.5 14.5 H21.6 L17.5 19.0 Z" fill="#222"/><path d="M1.9 19.0 V21.5 H17.5 L21.6 17.5 V14.5 M17.5 19.0 V21.5" fill="none" stroke="#222" stroke-width="1.3" /><path d="M9 17.5 L14.2 3.5" fill="none" stroke="#222" stroke-width="1.4" /><path d="M21.5 3.5 H15 V10.5 H21.5 M15 7 H20.5" fill="none" stroke="#222" stroke-width="1.5" /><path d="M8.5 18 L9 13.5 L11.5 15 Z" fill="#222"/></svg>
<svg style="position:absolute;left:1472px;top:100px;" width="24" height="24" viewBox="0 0 24 24"><path d="M1.9 19.0 L6.5 14.5 H21.6 L17.5 19.0 Z" fill="#222"/><path d="M1.9 19.0 V21.5 H17.5 L21.6 17.5 V14.5 M17.5 19.0 V21.5" fill="none" stroke="#222" stroke-width="1.3" /><path d="M6.4 12.7 H14.6 L10.5 17.8 Z M10.5 17.8 L21 3.6" fill="none" stroke="#222" stroke-width="1.5" /></svg>
<svg style="position:absolute;left:1504px;top:100px;" width="24" height="24" viewBox="0 0 24 24"><path d="M1.9 19.0 L6.5 14.5 H21.6 L17.5 19.0 Z" fill="#222"/><path d="M1.9 19.0 V21.5 H17.5 L21.6 17.5 V14.5 M17.5 19.0 V21.5" fill="none" stroke="#222" stroke-width="1.3" /><path d="M5.1 3.1 H13.8 V11.4 H5.1 Z M9.5 11.4 V15.5 M6 17 L9.5 15 L13 17" fill="none" stroke="#222" stroke-width="1.4" /><text x="6.6" y="9.6" font-size="7" font-family="Liberation Sans" fill="#222">A</text></svg>
<svg style="position:absolute;left:1439px;top:132px;" width="24" height="24" viewBox="0 0 24 24"><path d="M1.9 19.5 L6.5 15 H21.6 L17.5 19.5 Z" fill="#222"/><path d="M1.9 19.5 V22 H17.5 L21.6 18 V15 M17.5 19.5 V22" fill="none" stroke="#222" stroke-width="1.3" /><path d="M9.1 16.5 V3.2 H21.5 V9.6 H9.1 M13 3.2 V9.6 M17 3.2 V9.6 M5.5 18.5 L9.1 16 L13 18.5" fill="none" stroke="#222" stroke-width="1.5" /></svg>
<svg style="position:absolute;left:1472px;top:132px;" width="24" height="24" viewBox="0 0 24 24"><path d="M1.9 19.0 L6.5 14.5 H21.6 L17.5 19.0 Z" fill="#222"/><path d="M1.9 19.0 V21.5 H17.5 L21.6 17.5 V14.5 M17.5 19.0 V21.5" fill="none" stroke="#222" stroke-width="1.3" /><circle cx="14.2" cy="8.2" r="5" fill="#f1f1f1" stroke="#222" stroke-width="1.4"/><path d="M13 6.5 L14.5 5.5 V11" fill="none" stroke="#222" stroke-width="1.3" /><path d="M8.5 17.5 L11 12" fill="none" stroke="#222" stroke-width="1.3" /><path d="M18.7 24.7 L26 18.3 V24.7 Z" fill="#222"/></svg>
<svg style="position:absolute;left:1839px;top:69px;" width="24" height="24" viewBox="0 0 24 24"><path d="M1.8 9.4 H11.9 M1.8 9.4 V21.4 H21.4 V11.3 M4.3 13.2 H10 V18.2 H4.3 Z M12.5 17.6 H21.4 M12.5 17.6 V21.4 M11.9 3 H21.4 V11.3 H11.9 Z M7.5 9 C7.5 6 9 4.5 11.5 4" fill="none" stroke="#222" stroke-width="1.4" /><path d="M18.5 2.2 H22 V11.3 H19.8 V4.5 H18.5 Z" fill="#222"/><path d="M6 9.4 L7.5 6.5 L9 9.4 Z" fill="#222"/></svg>
<svg style="position:absolute;left:1839px;top:100px;" width="24" height="24" viewBox="0 0 24 24"><path d="M1.8 9.4 H14.4 M1.8 9.4 V22 H21.4 V9.4 M4.3 11.3 H11.9 V15 H4.3 Z M12.5 18.5 H21.4 M12.5 18.5 V22" fill="none" stroke="#222" stroke-width="1.4" /><path d="M14.4 2.4 H16.5 L18 4.5 H21.4 V9.4 H14.4 Z" fill="#222"/></svg>
<svg style="position:absolute;left:1538px;top:69px;" width="24" height="24" viewBox="0 0 24 24"><path d="M1.9 21.6 L5.6 15.8 H19.7 L16 21.6 Z M2.4 3.3 L8.7 11.5" fill="none" stroke="#222" stroke-width="1.5" /><path d="M9.5 13 L5 11 L9 8 Z" fill="#222"/><path d="M9 13.7 H17" fill="none" stroke="#222" stroke-width="1.3" stroke-dasharray="3 2"/><text x="14.5" y="11.8" font-size="13" font-family="Liberation Sans" fill="#222">?</text></svg>
<div class="t" style="left:1566px;top:66.00px;font-size:15px;line-height:15px;color:#2a2a2a;">Информация</div>
<div class="t" style="left:1566px;top:80.10px;font-size:15px;line-height:15px;color:#2a2a2a;">об объекте</div>
<svg style="position:absolute;left:1538px;top:100px;" width="24" height="24" viewBox="0 0 24 24"><path d="M1.7 6.6 L6.4 2.25 H15.4 V9.1 H21.7 V17.6 L17 21.6 H1.7 Z" fill="#222"/><path d="M2.9 7.4 H10.1 V14.3 H16.1 V20.4 H2.9 Z" fill="#f1f1f1"/></svg>
<div class="t" style="left:1566px;top:104.10px;font-size:15px;line-height:15px;color:#2a2a2a;">МЦХ модели</div>
<svg style="position:absolute;left:1538px;top:132px;" width="24" height="24" viewBox="0 0 24 24"><path d="M1.4 11.4 C3 7 5.5 4 7.7 4.1 C10 4.2 12 5 13.4 6.5 C15.5 9 17 12.5 20.2 13 L20.5 15.5 C17 15.5 14.5 13.5 12.9 11.4 C11.5 9.5 10.5 8.3 9.8 8.3 C8 8.3 6 12 4.5 15.6 Z" fill="none" stroke="#222" stroke-width="1.2" /><path d="M3 10 L5.5 13 M4.5 7.5 L7.5 10 M6.5 5 L9 8.5 M9 4.5 L10.5 8.3 M11.5 5 L12 9.5 M13.5 7 L13.5 11.5 M15.5 9.5 L15 13 M17.5 12 L17 14.5" fill="none" stroke="#222" stroke-width="0.8" /><path d="M18.6 23 L26 15.6 V23 Z" fill="#222"/></svg>
<div class="t" style="left:1566px;top:129.00px;font-size:15px;line-height:15px;color:#2a2a2a;">График</div>
<div class="t" style="left:1566px;top:143.10px;font-size:15px;line-height:15px;color:#2a2a2a;">кривизны</div>
<svg style="position:absolute;left:1688px;top:69px;" width="24" height="24" viewBox="0 0 24 24"><path d="M2 21.2 L5.7 16.5 H20 L16.5 21.2 Z M2 10.9 L11.4 6.7 M6.7 9 L11.4 17" fill="none" stroke="#222" stroke-width="1.5" /><path d="M12.3 14.2 H18.8" fill="none" stroke="#222" stroke-width="1.3" stroke-dasharray="2.5 1.5"/><text x="14.5" y="11.8" font-size="13" font-family="Liberation Sans" fill="#222">?</text><path d="M18.6 24.7 L25.4 17.9 V24.7 Z" fill="#222"/></svg>
<div class="t" style="left:1716px;top:66.00px;font-size:15px;line-height:15px;color:#2a2a2a;">Расстояние и</div>
<div class="t" style="left:1716px;top:80.10px;font-size:15px;line-height:15px;color:#2a2a2a;">угол</div>
<svg style="position:absolute;left:1688px;top:100px;" width="24" height="24" viewBox="0 0 24 24"><path d="M4 12.6 L7.6 2.4 H17.4 V12.6 Z" fill="#222"/><path d="M10.9 6.1 H14.2 V12.6 H10.9 Z" fill="#f1f1f1"/><path d="M0.5 16.4 L4 12.6 H21.5 V17 L17.5 21 V16.4 Z" fill="#222"/><path d="M0.5 16.4 H17.5 V21 H0.5 Z" fill="none" stroke="#222" stroke-width="1.5" /><path d="M7.6 15 H13.7 V19.2 H7.6 Z" fill="#222"/></svg>
<div class="t" style="left:1716px;top:97.00px;font-size:15px;line-height:15px;color:#2a2a2a;">Проверка</div>
<div class="t" style="left:1716px;top:111.10px;font-size:15px;line-height:15px;color:#2a2a2a;">коллизий</div>
<svg style="position:absolute;left:1688px;top:132px;" width="24" height="24" viewBox="0 0 24 24"><path d="M1.4 3 C2 9 4 12 6.6 14.5 C10 17.5 14 19.5 19.6 20.7" fill="none" stroke="#222" stroke-width="1.3" /><circle cx="6.6" cy="14.5" r="1.5" fill="#f1f1f1" stroke="#222" stroke-width="1.1"/><circle cx="18.6" cy="14" r="1" fill="#222"/><text x="5.5" y="11.8" font-size="10" font-family="Liberation Sans" fill="#222">G?</text></svg>
<div class="t" style="left:1716px;top:129.00px;font-size:15px;line-height:15px;color:#2a2a2a;">Проверка</div>
<div class="t" style="left:1716px;top:143.10px;font-size:15px;line-height:15px;color:#2a2a2a;">непрерывности</div>
<div style="position:absolute;left:0px;top:183px;width:30px;height:843px;background:#cbcbcb;"></div>
<div style="position:absolute;left:0px;top:183px;width:30px;height:94px;background:#f0f0f0;"></div>
<div style="position:absolute;left:30px;top:183px;width:1px;height:843px;background:#7b7b7b;"></div>
<svg style="position:absolute;left:3px;top:188px;" width="24" height="24" viewBox="0 0 24 24"><path d="M4.5 4 V20.5 H13 M4.5 14 H13 M4.5 8.5 H13" fill="none" stroke="#222" stroke-width="1.3" /><rect x="3" y="1.5" width="3.6" height="2.6" rx="0.8" fill="#f0f0f0" stroke="#222" stroke-width="1.1"/><rect x="13" y="7.2" width="3.6" height="2.6" rx="0.8" fill="#f0f0f0" stroke="#222" stroke-width="1.1"/><rect x="13" y="12.7" width="3.6" height="2.6" rx="0.8" fill="#f0f0f0" stroke="#222" stroke-width="1.1"/><rect x="13" y="19.2" width="3.6" height="2.6" rx="0.8" fill="#f0f0f0" stroke="#222" stroke-width="1.1"/></svg>
<div style="position:absolute;left:0px;top:215px;width:29px;height:31px;background:#474747;"></div>
<svg style="position:absolute;left:3px;top:218px;" width="24" height="24" viewBox="0 0 24 24"><text x="1" y="18" font-size="20" font-family="Liberation Serif" font-style="italic" fill="#ffffff">f</text><text x="9" y="21" font-size="16.0" font-family="Liberation Sans" fill="#ffffff">x</text></svg>
<svg style="position:absolute;left:3px;top:249px;" width="24" height="24" viewBox="0 0 24 24"><rect x="2" y="3" width="19" height="4" rx="2" fill="#222"/><rect x="2" y="10" width="19" height="4" rx="2" fill="#222"/><rect x="2" y="17" width="19" height="4" rx="2" fill="#222"/></svg>
<div style="position:absolute;left:31px;top:183px;width:811px;height:23px;background:#cbcbcb;"></div>
<div class="t" style="left:36px;top:187.77px;font-size:13.5px;line-height:13.5px;color:#333;">Переменные</div>
<svg style="position:absolute;left:822px;top:186px;" width="18" height="18" viewBox="0 0 18 18"><circle cx="9" cy="9" r="5.5" fill="none" stroke="#222" stroke-width="2.5"/><circle cx="9" cy="9" r="7" fill="none" stroke="#222" stroke-width="2.5" stroke-dasharray="2.5 3"/></svg>
<div style="position:absolute;left:31px;top:206px;width:811px;height:1px;background:#5e5e5e;"></div>
<div style="position:absolute;left:31px;top:207px;width:811px;height:32px;background:#f0f0f0;"></div>
<svg style="position:absolute;left:36px;top:211px;" width="24" height="24" viewBox="0 0 24 24"><text x="1" y="18" font-size="18" font-family="Liberation Serif" font-style="italic" fill="#222">f</text><text x="9" y="21" font-size="14.4" font-family="Liberation Sans" fill="#222">x</text></svg>
<svg style="position:absolute;left:67px;top:210px;" width="24" height="24" viewBox="0 0 24 24"><rect x="2" y="7" width="11" height="6" rx="3" transform="rotate(40 7.5 10)" fill="none" stroke="#222" stroke-width="1.7"/><rect x="9" y="12" width="11" height="6" rx="3" transform="rotate(40 14.5 15)" fill="none" stroke="#222" stroke-width="1.7"/></svg>
<svg style="position:absolute;left:99px;top:211px;" width="24" height="24" viewBox="0 0 24 24"><path d="M3.5 5 H20.5 V20 H3.5 Z M3.5 9 H20.5" fill="none" stroke="#222" stroke-width="1.5" /></svg>
<div style="position:absolute;left:130px;top:209px;width:1px;height:27px;background:#777;"></div>
<svg style="position:absolute;left:136px;top:211px;" width="24" height="24" viewBox="0 0 24 24"><path d="M4 13 L13 6 M4 13 L13 20" fill="none" stroke="#222" stroke-width="1.1" /><text x="1" y="17" font-size="9" font-family="Liberation Sans" fill="#222">F</text><path d="M14 4 H20 V8 H14 Z M14 18 H20 V22 H14 Z" fill="none" stroke="#222" stroke-width="1.3" /></svg>
<div style="position:absolute;left:166px;top:209px;width:1px;height:27px;background:#777;"></div>
<svg style="position:absolute;left:172px;top:211px;" width="24" height="24" viewBox="0 0 24 24"><path d="M12 2 L19 10 H15 V19 H9 V10 H5 Z" fill="#cdcdcd"/></svg>
<svg style="position:absolute;left:204px;top:211px;" width="24" height="24" viewBox="0 0 24 24"><path d="M12 21 L19 13 H15 V4 H9 V13 H5 Z" fill="#cdcdcd"/></svg>
<div style="position:absolute;left:31px;top:239px;width:811px;height:33px;background:#ffffff;"></div>
<svg style="position:absolute;left:39px;top:248px;" width="16" height="16" viewBox="0 0 16 16"><circle cx="9.5" cy="6" r="4.5" fill="none" stroke="#a0a0a0" stroke-width="1.6"/><path d="M6.2 9.5 L1.5 13.5" stroke="#a0a0a0" stroke-width="2.2"/></svg>
<div style="position:absolute;left:31px;top:272px;width:811px;height:28px;background:#f0f0f0;"></div>
<div style="position:absolute;left:31px;top:300px;width:811px;height:2px;background:#3a3a3a;"></div>
<div style="position:absolute;left:31px;top:302px;width:799px;height:5px;background:linear-gradient(#c4c4c4,rgba(255,255,255,0));z-index:1"></div>
<div style="position:absolute;left:86px;top:272px;width:1px;height:28px;background:#c4c4c4;"></div>
<div style="position:absolute;left:177px;top:272px;width:1px;height:28px;background:#c4c4c4;"></div>
<div style="position:absolute;left:293px;top:272px;width:1px;height:28px;background:#c4c4c4;"></div>
<div style="position:absolute;left:410px;top:272px;width:1px;height:28px;background:#c4c4c4;"></div>
<div style="position:absolute;left:527px;top:272px;width:1px;height:28px;background:#c4c4c4;"></div>
<div class="t" style="left:91px;top:279.80px;font-size:15px;line-height:15px;color:#333;">Имя</div>
<div class="t" style="left:182px;top:279.80px;font-size:15px;line-height:15px;color:#333;">Выражение</div>
<div class="t" style="left:298px;top:279.80px;font-size:15px;line-height:15px;color:#333;">Значение</div>
<div class="t" style="left:415px;top:279.80px;font-size:15px;line-height:15px;color:#333;">Параметр</div>
<div class="t" style="left:532px;top:279.80px;font-size:15px;line-height:15px;color:#333;">Комментарий</div>
<div style="position:absolute;left:31px;top:302.4px;width:799px;height:342.6px;background:#ffffff;"></div>
<div style="position:absolute;left:294px;top:302.4px;width:116px;height:342.6px;background:#f0f0f0;"></div>
<div style="position:absolute;left:411px;top:302.4px;width:116px;height:342.6px;background:#f0f0f0;"></div>
<svg style="position:absolute;left:34px;top:310.4px;" width="12" height="12" viewBox="0 0 12 12"><path d="M2 10 L9 3 M4 2.5 L9.5 2.5 L9.5 8 Z" stroke="#1a1a1a" stroke-width="2" fill="#1a1a1a"/></svg>
<div class="t" style="left:92px;top:310.20px;font-size:15px;line-height:15px;color:#333;">Alpha</div>
<div class="t" style="right:1626px;top:310.20px;font-size:15px;line-height:15px;color:#333;">95</div>
<div class="t" style="right:1509px;top:310.20px;font-size:15px;line-height:15px;color:#333;">95</div>
<div class="t" style="left:533px;top:310.20px;font-size:15px;line-height:15px;color:#333;">Угол α</div>
<div style="position:absolute;left:31px;top:333px;width:799px;height:1.2px;background:#c8c8c8;"></div>
<svg style="position:absolute;left:34px;top:341.54999999999995px;" width="12" height="12" viewBox="0 0 12 12"><path d="M2 10 L9 3 M4 2.5 L9.5 2.5 L9.5 8 Z" stroke="#1a1a1a" stroke-width="2" fill="#1a1a1a"/></svg>
<div class="t" style="left:92px;top:341.35px;font-size:15px;line-height:15px;color:#333;">Beta</div>
<div class="t" style="right:1626px;top:341.35px;font-size:15px;line-height:15px;color:#333;">141</div>
<div class="t" style="right:1509px;top:341.35px;font-size:15px;line-height:15px;color:#333;">141</div>
<div class="t" style="left:533px;top:341.35px;font-size:15px;line-height:15px;color:#333;">Угол β</div>
<div style="position:absolute;left:31px;top:364px;width:799px;height:1.2px;background:#c8c8c8;"></div>
<svg style="position:absolute;left:34px;top:372.7px;" width="12" height="12" viewBox="0 0 12 12"><path d="M2 10 L9 3 M4 2.5 L9.5 2.5 L9.5 8 Z" stroke="#1a1a1a" stroke-width="2" fill="#1a1a1a"/></svg>
<div class="t" style="left:92px;top:372.50px;font-size:15px;line-height:15px;color:#333;">Gamma</div>
<div class="t" style="right:1626px;top:372.50px;font-size:15px;line-height:15px;color:#333;">208</div>
<div class="t" style="right:1509px;top:372.50px;font-size:15px;line-height:15px;color:#333;">208</div>
<div class="t" style="left:533px;top:372.50px;font-size:15px;line-height:15px;color:#333;">Угол γ</div>
<div style="position:absolute;left:31px;top:395px;width:799px;height:1.2px;background:#c8c8c8;"></div>
<svg style="position:absolute;left:34px;top:403.84999999999997px;" width="12" height="12" viewBox="0 0 12 12"><path d="M2 10 L9 3 M4 2.5 L9.5 2.5 L9.5 8 Z" stroke="#1a1a1a" stroke-width="2" fill="#1a1a1a"/></svg>
<div class="t" style="left:92px;top:403.65px;font-size:15px;line-height:15px;color:#333;">Sigma</div>
<div class="t" style="right:1626px;top:403.65px;font-size:15px;line-height:15px;color:#333;">236</div>
<div class="t" style="right:1509px;top:403.65px;font-size:15px;line-height:15px;color:#333;">236</div>
<div class="t" style="left:533px;top:403.65px;font-size:15px;line-height:15px;color:#333;">Угол δ</div>
<div style="position:absolute;left:31px;top:426px;width:799px;height:1.2px;background:#c8c8c8;"></div>
<svg style="position:absolute;left:34px;top:435.0px;" width="12" height="12" viewBox="0 0 12 12"><path d="M2 10 L9 3 M4 2.5 L9.5 2.5 L9.5 8 Z" stroke="#1a1a1a" stroke-width="2" fill="#1a1a1a"/></svg>
<div class="t" style="left:92px;top:434.80px;font-size:15px;line-height:15px;color:#333;">L1</div>
<div class="t" style="right:1626px;top:434.80px;font-size:15px;line-height:15px;color:#333;">17</div>
<div class="t" style="right:1509px;top:434.80px;font-size:15px;line-height:15px;color:#333;">17</div>
<div class="t" style="left:533px;top:434.80px;font-size:15px;line-height:15px;color:#333;">Длинна хвостовика контакта. Пайка</div>
<div style="position:absolute;left:31px;top:457px;width:799px;height:1.2px;background:#c8c8c8;"></div>
<svg style="position:absolute;left:34px;top:466.15px;" width="12" height="12" viewBox="0 0 12 12"><path d="M2 10 L9 3 M4 2.5 L9.5 2.5 L9.5 8 Z" stroke="#1a1a1a" stroke-width="2" fill="#1a1a1a"/></svg>
<div class="t" style="left:92px;top:465.95px;font-size:15px;line-height:15px;color:#333;">l</div>
<div class="t" style="right:1626px;top:465.95px;font-size:15px;line-height:15px;color:#333;">12</div>
<div class="t" style="right:1509px;top:465.95px;font-size:15px;line-height:15px;color:#333;">12</div>
<div class="t" style="left:533px;top:465.95px;font-size:15px;line-height:15px;color:#333;">Длинна хвостовика контакта. Основание</div>
<div style="position:absolute;left:31px;top:488px;width:799px;height:1.2px;background:#c8c8c8;"></div>
<svg style="position:absolute;left:34px;top:497.29999999999995px;" width="12" height="12" viewBox="0 0 12 12"><path d="M2 10 L9 3 M4 2.5 L9.5 2.5 L9.5 8 Z" stroke="#1a1a1a" stroke-width="2" fill="#1a1a1a"/></svg>
<div class="t" style="left:92px;top:497.10px;font-size:15px;line-height:15px;color:#333;">N</div>
<div class="t" style="right:1626px;top:497.10px;font-size:15px;line-height:15px;color:#333;">10</div>
<div class="t" style="right:1509px;top:497.10px;font-size:15px;line-height:15px;color:#333;">10</div>
<div class="t" style="left:533px;top:497.10px;font-size:15px;line-height:15px;color:#333;">Количество контактов</div>
<div style="position:absolute;left:31px;top:519px;width:799px;height:1.2px;background:#c8c8c8;"></div>
<div style="position:absolute;left:31px;top:519.4499999999999px;width:147px;height:31.15px;background:#fcd985;"></div>
<div style="position:absolute;left:178px;top:519.4499999999999px;width:115px;height:31.15px;background:#f7d37c;"></div>
<div style="position:absolute;left:294px;top:519.4499999999999px;width:233px;height:31.15px;background:#f6e2ae;"></div>
<div style="position:absolute;left:528px;top:519.4499999999999px;width:302px;height:31.15px;background:#f7d67e;"></div>
<svg style="position:absolute;left:34px;top:528.4499999999999px;" width="12" height="12" viewBox="0 0 12 12"><path d="M2 10 L9 3 M4 2.5 L9.5 2.5 L9.5 8 Z" stroke="#1a1a1a" stroke-width="2" fill="#1a1a1a"/></svg>
<div class="t" style="left:92px;top:528.25px;font-size:15px;line-height:15px;color:#333;">Isp_Type</div>
<div class="t" style="right:1626px;top:528.25px;font-size:15px;line-height:15px;color:#333;">1</div>
<div class="t" style="right:1509px;top:528.25px;font-size:15px;line-height:15px;color:#333;">1</div>
<div class="t" style="left:533px;top:528.25px;font-size:15px;line-height:15px;color:#333;">Вилка=1; Розетка=2</div>
<div style="position:absolute;left:31px;top:551px;width:799px;height:1.2px;background:#c8c8c8;"></div>
<svg style="position:absolute;left:34px;top:559.5999999999999px;" width="12" height="12" viewBox="0 0 12 12"><path d="M2 10 L9 3 M4 2.5 L9.5 2.5 L9.5 8 Z" stroke="#1a1a1a" stroke-width="2" fill="#1a1a1a"/></svg>
<div class="t" style="left:92px;top:559.40px;font-size:15px;line-height:15px;color:#333;">Isp_KrepIr...</div>
<div class="t" style="right:1626px;top:559.40px;font-size:15px;line-height:15px;color:#333;">1</div>
<div class="t" style="right:1509px;top:559.40px;font-size:15px;line-height:15px;color:#333;">1</div>
<div class="t" style="left:533px;top:559.40px;font-size:15px;line-height:15px;color:#333;">Винт=1; Гайка=2</div>
<div style="position:absolute;left:31px;top:582px;width:799px;height:1.2px;background:#c8c8c8;"></div>
<svg style="position:absolute;left:34px;top:590.75px;" width="12" height="12" viewBox="0 0 12 12"><path d="M2 10 L9 3 M4 2.5 L9.5 2.5 L9.5 8 Z" stroke="#1a1a1a" stroke-width="2" fill="#1a1a1a"/></svg>
<div class="t" style="left:92px;top:590.55px;font-size:15px;line-height:15px;color:#333;">h</div>
<div class="t" style="right:1626px;top:590.55px;font-size:15px;line-height:15px;color:#333;">3</div>
<div class="t" style="right:1509px;top:590.55px;font-size:15px;line-height:15px;color:#333;">3</div>
<div class="t" style="left:533px;top:590.55px;font-size:15px;line-height:15px;color:#333;">Толщина стенки блока</div>
<div style="position:absolute;left:31px;top:613px;width:799px;height:1.2px;background:#c8c8c8;"></div>
<div style="position:absolute;left:31px;top:644px;width:799px;height:1.2px;background:#c8c8c8;"></div>
<div style="position:absolute;left:86px;top:302.4px;width:1px;height:342.6px;background:#c4c4c4;"></div>
<div style="position:absolute;left:177px;top:302.4px;width:1px;height:342.6px;background:#c4c4c4;"></div>
<div style="position:absolute;left:293px;top:302.4px;width:1px;height:342.6px;background:#c4c4c4;"></div>
<div style="position:absolute;left:410px;top:302.4px;width:1px;height:342.6px;background:#c4c4c4;"></div>
<div style="position:absolute;left:527px;top:302.4px;width:1px;height:342.6px;background:#c4c4c4;"></div>
<div style="position:absolute;left:31px;top:645px;width:800px;height:381px;background:#f0f0f0;"></div>
<div class="t" style="left:76px;top:654.70px;font-size:15px;line-height:15px;color:#333;">Начало координат</div>
<svg style="position:absolute;left:60px;top:657.9px;" width="7" height="8" viewBox="0 0 7 8"><path d="M0.5 0.5 L6.5 4 L0.5 7.5 Z" fill="#222"/></svg>
<div style="position:absolute;left:31px;top:677px;width:799px;height:1px;background:#a9a9a9;"></div>
<div style="position:absolute;left:31px;top:678px;width:799px;height:1px;background:#e2e2e2;"></div>
<div class="t" style="left:76px;top:685.93px;font-size:15px;line-height:15px;color:#333;">Корпус СНЦ144. Типоразмер 13. Винты.</div>
<svg style="position:absolute;left:60px;top:689.13px;" width="7" height="8" viewBox="0 0 7 8"><path d="M0.5 0.5 L6.5 4 L0.5 7.5 Z" fill="#222"/></svg>
<div style="position:absolute;left:31px;top:708px;width:799px;height:1px;background:#a9a9a9;"></div>
<div style="position:absolute;left:31px;top:709px;width:799px;height:1px;background:#e2e2e2;"></div>
<div class="t" style="left:76px;top:717.16px;font-size:15px;line-height:15px;color:#333;">Изолятор с контактами СНЦ144К-4/13ВП21</div>
<svg style="position:absolute;left:60px;top:720.36px;" width="7" height="8" viewBox="0 0 7 8"><path d="M0.5 0.5 L6.5 4 L0.5 7.5 Z" fill="#222"/></svg>
<div style="position:absolute;left:31px;top:739px;width:799px;height:1px;background:#a9a9a9;"></div>
<div style="position:absolute;left:31px;top:740px;width:799px;height:1px;background:#e2e2e2;"></div>
<div class="t" style="left:76px;top:748.39px;font-size:15px;line-height:15px;color:#333;">Изолятор с контактами СНЦ144К-4/13РП21</div>
<svg style="position:absolute;left:60px;top:751.5899999999999px;" width="7" height="8" viewBox="0 0 7 8"><path d="M0.5 0.5 L6.5 4 L0.5 7.5 Z" fill="#222"/></svg>
<div style="position:absolute;left:31px;top:771px;width:799px;height:1px;background:#a9a9a9;"></div>
<div style="position:absolute;left:31px;top:772px;width:799px;height:1px;background:#e2e2e2;"></div>
<div class="t" style="left:76px;top:779.62px;font-size:15px;line-height:15px;color:#333;">Изолятор с контактами СНЦ144К-8/13ВП21</div>
<svg style="position:absolute;left:60px;top:782.8199999999999px;" width="7" height="8" viewBox="0 0 7 8"><path d="M0.5 0.5 L6.5 4 L0.5 7.5 Z" fill="#222"/></svg>
<div style="position:absolute;left:31px;top:802px;width:799px;height:1px;background:#a9a9a9;"></div>
<div style="position:absolute;left:31px;top:803px;width:799px;height:1px;background:#e2e2e2;"></div>
<div class="t" style="left:76px;top:810.85px;font-size:15px;line-height:15px;color:#333;">Изолятор с контактами СНЦ144К-8/13РП21</div>
<svg style="position:absolute;left:60px;top:814.05px;" width="7" height="8" viewBox="0 0 7 8"><path d="M0.5 0.5 L6.5 4 L0.5 7.5 Z" fill="#222"/></svg>
<div style="position:absolute;left:31px;top:833px;width:799px;height:1px;background:#a9a9a9;"></div>
<div style="position:absolute;left:31px;top:834px;width:799px;height:1px;background:#e2e2e2;"></div>
<div class="t" style="left:76px;top:842.08px;font-size:15px;line-height:15px;color:#333;">Деталь</div>
<svg style="position:absolute;left:60px;top:845.28px;" width="7" height="8" viewBox="0 0 7 8"><path d="M0.5 0.5 L6.5 4 L0.5 7.5 Z" fill="#222"/></svg>
<div style="position:absolute;left:31px;top:864px;width:799px;height:1px;background:#a9a9a9;"></div>
<div style="position:absolute;left:31px;top:865px;width:799px;height:1px;background:#e2e2e2;"></div>
<div class="t" style="left:76px;top:873.31px;font-size:15px;line-height:15px;color:#333;">Деталь</div>
<svg style="position:absolute;left:60px;top:876.51px;" width="7" height="8" viewBox="0 0 7 8"><path d="M0.5 0.5 L6.5 4 L0.5 7.5 Z" fill="#222"/></svg>
<div style="position:absolute;left:31px;top:895px;width:799px;height:1px;background:#a9a9a9;"></div>
<div style="position:absolute;left:31px;top:896px;width:799px;height:1px;background:#e2e2e2;"></div>
<div class="t" style="left:76px;top:904.54px;font-size:15px;line-height:15px;color:#333;">Изолятор с контактами СНЦ144К-22/13ВП21</div>
<svg style="position:absolute;left:60px;top:907.74px;" width="7" height="8" viewBox="0 0 7 8"><path d="M0.5 0.5 L6.5 4 L0.5 7.5 Z" fill="#222"/></svg>
<div style="position:absolute;left:31px;top:927px;width:799px;height:1px;background:#a9a9a9;"></div>
<div style="position:absolute;left:31px;top:928px;width:799px;height:1px;background:#e2e2e2;"></div>
<div class="t" style="left:76px;top:935.77px;font-size:15px;line-height:15px;color:#333;">Деталь</div>
<svg style="position:absolute;left:60px;top:938.97px;" width="7" height="8" viewBox="0 0 7 8"><path d="M0.5 0.5 L6.5 4 L0.5 7.5 Z" fill="#222"/></svg>
<div style="position:absolute;left:31px;top:958px;width:799px;height:1px;background:#a9a9a9;"></div>
<div style="position:absolute;left:31px;top:959px;width:799px;height:1px;background:#e2e2e2;"></div>
<div class="t" style="left:76px;top:967.00px;font-size:15px;line-height:15px;color:#333;">Корпус СНЦ144К. Типоразмер 13. Гайка.</div>
<svg style="position:absolute;left:60px;top:970.2px;" width="7" height="8" viewBox="0 0 7 8"><path d="M0.5 0.5 L6.5 4 L0.5 7.5 Z" fill="#222"/></svg>
<div style="position:absolute;left:31px;top:989px;width:799px;height:1px;background:#a9a9a9;"></div>
<div style="position:absolute;left:31px;top:990px;width:799px;height:1px;background:#e2e2e2;"></div>
<div class="t" style="left:76px;top:998.23px;font-size:15px;line-height:15px;color:#333;">Гайка СНЦ144К М25</div>
<svg style="position:absolute;left:60px;top:1001.4300000000001px;" width="7" height="8" viewBox="0 0 7 8"><path d="M0.5 0.5 L6.5 4 L0.5 7.5 Z" fill="#222"/></svg>
<div style="position:absolute;left:830px;top:302px;width:12px;height:724px;background:#fafafa;"></div>
<div style="position:absolute;left:831px;top:323px;width:10px;height:552px;background:#c2c2c2;"></div>
<div style="position:absolute;left:31px;top:1013px;width:811px;height:13px;background:#fafafa;"></div>
<div style="position:absolute;left:31px;top:1014px;width:616px;height:10px;background:#bdbdbd;"></div>
<div style="position:absolute;left:31px;top:1020px;width:811px;height:1px;background:#d0d0d0;"></div>
<div style="position:absolute;left:830px;top:1020px;width:12px;height:1px;background:#777;"></div>
<div style="position:absolute;left:842px;top:183px;width:1px;height:843px;background:#6a6a6a;"></div>
<div style="position:absolute;left:843px;top:183px;width:1035px;height:843px;background:#ffffff;"></div>
<div style="position:absolute;left:1878px;top:183px;width:1px;height:843px;background:#5a5a5a;"></div>
<div style="position:absolute;left:1879px;top:183px;width:35px;height:843px;background:#cbcbcb;"></div>
<div style="position:absolute;left:1879px;top:183px;width:33px;height:31px;background:#f0f0f0;"></div>
<div style="position:absolute;left:1913px;top:0px;width:1px;height:1026px;background:#111111;"></div>
<svg style="position:absolute;left:1886px;top:188px;" width="20" height="20" viewBox="0 0 20 20"><path d="M3 1.5 H17 V19 H3 Z" fill="none" stroke="#1a1a3a" stroke-width="1.4" /><path d="M6 5 H8 V8 H6 Z M10 6.5 H14 M5.5 11 L7 13 L9 10 M10 11.5 H14 M5.5 15 L7 17 L9 14 M10 16 H14" fill="none" stroke="#222" stroke-width="1.2" /></svg>
<div style="position:absolute;left:859px;top:182px;width:699px;height:34px;background:#f0f0f0;box-sizing:border-box;border:1px solid #6e6e6e;"></div>
<div style="position:absolute;left:860px;top:183px;width:19px;height:32px;background:#e3e3e3;"></div>
<svg style="position:absolute;left:863px;top:188px" width="14" height="6" viewBox="0 0 14 6"><rect x="0.5" y="0" width="2" height="2" fill="#222"/><rect x="0.5" y="4" width="2" height="2" fill="#222"/><rect x="4" y="0" width="2" height="2" fill="#222"/><rect x="4" y="4" width="2" height="2" fill="#222"/><rect x="7.5" y="0" width="2" height="2" fill="#222"/><rect x="7.5" y="4" width="2" height="2" fill="#222"/><rect x="11" y="0" width="2" height="2" fill="#222"/><rect x="11" y="4" width="2" height="2" fill="#222"/></svg>
<div style="position:absolute;left:1072px;top:183px;width:33px;height:32px;background:#4a4a4a;"></div>
<div style="position:absolute;left:1167px;top:183px;width:59px;height:32px;background:#4a4a4a;"></div>
<div style="position:absolute;left:1290px;top:183px;width:33px;height:32px;background:#4a4a4a;"></div>
<div style="position:absolute;left:1428px;top:183px;width:59px;height:32px;background:#4a4a4a;"></div>
<div style="position:absolute;left:879px;top:183px;width:1px;height:32px;background:#7a7a7a;"></div>
<div style="position:absolute;left:915px;top:183px;width:1px;height:32px;background:#7a7a7a;"></div>
<div style="position:absolute;left:1070px;top:183px;width:1px;height:32px;background:#7a7a7a;"></div>
<div style="position:absolute;left:1166px;top:183px;width:1px;height:32px;background:#7a7a7a;"></div>
<div style="position:absolute;left:1288px;top:183px;width:1px;height:32px;background:#7a7a7a;"></div>
<div style="position:absolute;left:1427px;top:183px;width:1px;height:32px;background:#7a7a7a;"></div>
<div style="position:absolute;left:1487px;top:183px;width:1px;height:32px;background:#7a7a7a;"></div>
<svg style="position:absolute;left:887px;top:188px" width="22" height="22" viewBox="0 0 22 22"><path d="M4 3 V19 H18 V12 H10 V3 Z" fill="none" stroke="#222" stroke-width="1.4" /><circle cx="4" cy="3" r="1.6" fill="#f0f0f0" stroke="#222" stroke-width="1.1"/><circle cx="10" cy="3" r="1.6" fill="#f0f0f0" stroke="#222" stroke-width="1.1"/><circle cx="10" cy="12" r="1.6" fill="#f0f0f0" stroke="#222" stroke-width="1.1"/><circle cx="18" cy="12" r="1.6" fill="#f0f0f0" stroke="#222" stroke-width="1.1"/><circle cx="18" cy="19" r="1.6" fill="#f0f0f0" stroke="#222" stroke-width="1.1"/><circle cx="4" cy="19" r="1.6" fill="#f0f0f0" stroke="#222" stroke-width="1.1"/></svg>
<svg style="position:absolute;left:922px;top:188px" width="22" height="22" viewBox="0 0 22 22"><circle cx="9" cy="9" r="6.5" fill="none" stroke="#222" stroke-width="1.4"/><path d="M13 13 L19 19" fill="none" stroke="#222" stroke-width="2.8" /><path d="M9 3 V15 M12 3 H18 V13" fill="none" stroke="#222" stroke-width="1.1" stroke-dasharray="1.2 1.2"/></svg>
<svg style="position:absolute;left:957px;top:195px" width="12" height="8" viewBox="0 0 12 8"><path d="M0.5 1 L11.5 1 L6 7 Z" fill="#222"/></svg>
<svg style="position:absolute;left:982px;top:187px" width="24" height="24" viewBox="0 0 24 24"><path d="M6 13 H21 L15 22 H0 Z" fill="#222"/><path d="M11 2 L17 8 H14 V16 H8 V8 H5 Z" fill="#222"/><path d="M9.5 8 H12.5 V15 H9.5Z" fill="#f0f0f0"/></svg>
<svg style="position:absolute;left:1015px;top:187px" width="24" height="24" viewBox="0 0 24 24"><path d="M11 4 V14 H21 M11 14 L3 21" fill="none" stroke="#222" stroke-width="1.3" /><path d="M11 1 L14 5 H8 Z" fill="#222"/><path d="M22 14 L18 11 V17 Z" fill="#222"/><path d="M2 22 L3 17 L6 20 Z" fill="#222"/><rect x="9" y="12" width="5" height="5" fill="#f0f0f0" stroke="#222" stroke-width="1.2"/></svg>
<svg style="position:absolute;left:1049px;top:195px" width="12" height="8" viewBox="0 0 12 8"><path d="M0.5 1 L11.5 1 L6 7 Z" fill="#222"/></svg>
<svg style="position:absolute;left:1077px;top:187px" width="24" height="24" viewBox="0 0 24 24"><path d="M3 7 L12 2 L21 7 V17 L12 22 L3 17 Z" fill="#fff"/><path d="M3 7 L12 11 L21 7 M12 11 V22" fill="none" stroke="#4a4a4a" stroke-width="1.2" /></svg>
<svg style="position:absolute;left:1110px;top:187px" width="24" height="24" viewBox="0 0 24 24"><path d="M3 7 L12 2 L21 7 V17 L12 22 L3 17 Z M3 7 L12 11 L21 7 M12 11 V22 M3 17 L12 13 L21 17 M12 2 V13" fill="none" stroke="#222" stroke-width="1.2" /></svg>
<svg style="position:absolute;left:1146px;top:195px" width="12" height="8" viewBox="0 0 12 8"><path d="M0.5 1 L11.5 1 L6 7 Z" fill="#222"/></svg>
<svg style="position:absolute;left:1173px;top:187px" width="24" height="24" viewBox="0 0 24 24"><path d="M2 12 C6 5 18 5 22 12 C18 19 6 19 2 12 Z" fill="none" stroke="#fff" stroke-width="1.6" /><circle cx="12" cy="12" r="3.5" fill="none" stroke="#fff" stroke-width="2"/><path d="M4 3 L20 21" fill="none" stroke="#fff" stroke-width="1.5" /></svg>
<svg style="position:absolute;left:1207px;top:195px" width="12" height="8" viewBox="0 0 12 8"><path d="M0.5 1 L11.5 1 L6 7 Z" fill="#fff"/></svg>
<svg style="position:absolute;left:1233px;top:187px" width="24" height="24" viewBox="0 0 24 24"><path d="M2 5 H21 V19 H2 Z" fill="#222"/><ellipse cx="12" cy="12" rx="7" ry="4.5" fill="#f0f0f0"/><circle cx="12" cy="12" r="2.8" fill="#222"/><path d="M4 3 L21 21" fill="none" stroke="#222" stroke-width="1.3" /></svg>
<svg style="position:absolute;left:1268px;top:195px" width="12" height="8" viewBox="0 0 12 8"><path d="M0.5 1 L11.5 1 L6 7 Z" fill="#222"/></svg>
<svg style="position:absolute;left:1295px;top:187px" width="24" height="24" viewBox="0 0 24 24"><path d="M5 17 L19 7" fill="none" stroke="#fff" stroke-width="1.3" /><circle cx="5" cy="17" r="2.5" fill="none" stroke="#fff" stroke-width="1.3"/><circle cx="19" cy="7" r="2.5" fill="none" stroke="#fff" stroke-width="1.3"/><path d="M6 3 L9 6 L6 9 L3 6 Z M17 15 L20 18 L17 21 L14 18 Z" fill="#fff"/><path d="M6 4.5 L7.5 6 L6 7.5 L4.5 6 Z M17 16.5 L18.5 18 L17 19.5 L15.5 18 Z" fill="#4a4a4a"/></svg>
<svg style="position:absolute;left:1329px;top:187px" width="24" height="24" viewBox="0 0 24 24"><path d="M1.2 9 H7 M1.2 20.3 H7 M3.6 11.5 V18" fill="none" stroke="#222" stroke-width="1.3" /><path d="M3.6 10.5 L2 13 H5.2 Z M3.6 19 L2 16.5 H5.2 Z" fill="#222"/><path d="M8 9.5 H19 V19.4 H8 Z" fill="none" stroke="#222" stroke-width="2" /><path d="M7 8.5 L9 6.4 H21.6 V18 L19.5 20.3 V8.5 Z" fill="#222"/><path d="M9.6 1 V6.4 M21 1 V6.4 M10.5 2.8 H20" fill="none" stroke="#222" stroke-width="1.3" /><path d="M10 2.8 L12.5 1.3 V4.3 Z M20.5 2.8 L18 1.3 V4.3 Z" fill="#222"/></svg>
<svg style="position:absolute;left:1362px;top:187px" width="24" height="24" viewBox="0 0 24 24"><path d="M3.8 6 V19.5 H7.7 M3.8 6 C3.8 3 6 1.5 9 1.5 M4.8 8 L13.2 20" fill="none" stroke="#222" stroke-width="1.3" /><path d="M4.8 6.4 L9 1.2 H17.3 L12.1 8 Z" fill="#222"/><path d="M12.1 8 L17.3 1.2 V9.3 H14.7 L12.1 13 Z" fill="#222"/><path d="M11.6 13.8 L14.7 9.3 H22.6 L18.4 14.3 Z" fill="#222"/><path d="M18.4 14.3 L22.6 9.3 V16 L18.4 21 Z" fill="#222"/><path d="M12.1 13.8 V20.5 H18.4" fill="none" stroke="#222" stroke-width="1.3" /><path d="M9.5 18.5 L12.2 16 V19.5 Z" fill="#222"/></svg>
<svg style="position:absolute;left:1396px;top:187px" width="24" height="24" viewBox="0 0 24 24"><path d="M2.4 6.4 V21.6 H17.3 L23 16.4 L8 1.5 Z" fill="#222"/><path d="M5.8 9.5 V18.2 H14.5 L12 15.5 H8.8 V12 Z" fill="#f0f0f0"/><path d="M2.8 6.2 L8 1.8 L22.5 16.2" fill="none" stroke="#f0f0f0" stroke-width="1.6" stroke-dasharray="1.8 1.8"/></svg>
<svg style="position:absolute;left:1433px;top:187px" width="24" height="24" viewBox="0 0 24 24"><path d="M2 3 H22 L14 12 V21 H10 V12 Z" fill="#fff"/></svg>
<svg style="position:absolute;left:1467px;top:195px" width="12" height="8" viewBox="0 0 12 8"><path d="M0.5 1 L11.5 1 L6 7 Z" fill="#fff"/></svg>
<svg style="position:absolute;left:1494px;top:187px" width="24" height="24" viewBox="0 0 24 24"><path d="M3 3 H21 M7 3 V16 M15 3 V21 M19 3 V21 M15 6 L19 9 M19 9 L15 12 L19 15 L15 18" fill="none" stroke="#222" stroke-width="1.3" /><path d="M3 15 H10 V21 H3 Z M3 18 H10 M6.5 15 V21" fill="none" stroke="#222" stroke-width="1.3" /></svg>
<svg style="position:absolute;left:1530px;top:187px" width="24" height="24" viewBox="0 0 24 24"><path d="M3 21 L5 15 L14 6 L18 10 L9 19 Z M14 6 L17 3 C19 1 23 5 21 7 L18 10" fill="none" stroke="#c6c6c6" stroke-width="1.3" /></svg>
<svg style="position:absolute;left:0;top:0" width="1914" height="1026" viewBox="0 0 1914 1026"><defs><linearGradient id="gBody" gradientUnits="userSpaceOnUse" x1="1190" y1="540" x2="1390" y2="700"><stop offset="0" stop-color="#8f9b74"/><stop offset="0.45" stop-color="#6b7551"/><stop offset="0.8" stop-color="#4a5137"/><stop offset="1" stop-color="#4f563b"/></linearGradient><linearGradient id="gThr" gradientUnits="userSpaceOnUse" x1="1140" y1="545" x2="1320" y2="740"><stop offset="0" stop-color="#9ca87f"/><stop offset="0.45" stop-color="#6f7955"/><stop offset="1" stop-color="#4e553b"/></linearGradient><linearGradient id="gIn" gradientUnits="userSpaceOnUse" x1="1130" y1="610" x2="1230" y2="770"><stop offset="0" stop-color="#454b34"/><stop offset="0.45" stop-color="#525a3f"/><stop offset="1" stop-color="#8a966d"/></linearGradient><linearGradient id="gPink" gradientUnits="userSpaceOnUse" x1="1180" y1="600" x2="1270" y2="720"><stop offset="0" stop-color="#b06f60"/><stop offset="1" stop-color="#d49080"/></linearGradient><linearGradient id="gHole" x1="0" y1="0" x2="1" y2="1"><stop offset="0" stop-color="#3f4530"/><stop offset="1" stop-color="#7c8760"/></linearGradient></defs><path d="M1133 517 L1347 432 L1363 440 L1480 687 L1479 702 L1463 710 L1263 790 L1147 570 L1131 533 Z" fill="#6e7954" stroke="#111" stroke-width="1"/><path d="M1350 446 L1363 440 L1480 687 L1479 702 L1466 696 Z" fill="#4f573c" stroke="#111" stroke-width="1"/><path d="M1466 696 L1479 702 L1463 710 L1450 703 Z" fill="#5a6244" stroke="#111" stroke-width="1"/><path d="M1336 436 L1350 446 M1135 520 L1336 436" fill="none" stroke="#111" stroke-width="0.8"/><clipPath id="hc0"><ellipse cx="1165.0" cy="540.0" rx="21" ry="15" transform="rotate(20 1165.0 540.0)" fill="#000" /></clipPath><ellipse cx="1165" cy="540" rx="21" ry="15" transform="rotate(20 1165 540)" fill="url(#gHole)"/><g clip-path="url(#hc0)"><ellipse cx="1178.0" cy="534.0" rx="21" ry="15" transform="rotate(20 1178.0 534.0)" fill="#ffffff" stroke="#111" stroke-width="1"/></g><ellipse cx="1165.0" cy="540.0" rx="21" ry="15" transform="rotate(20 1165.0 540.0)" fill="none" stroke="#111" stroke-width="1"/><clipPath id="hc1"><ellipse cx="1333.0" cy="477.0" rx="16" ry="24" transform="rotate(12 1333.0 477.0)" fill="#000" /></clipPath><ellipse cx="1333" cy="477" rx="16" ry="24" transform="rotate(12 1333 477)" fill="url(#gHole)"/><g clip-path="url(#hc1)"><ellipse cx="1346.0" cy="471.0" rx="16" ry="24" transform="rotate(12 1346.0 471.0)" fill="#ffffff" stroke="#111" stroke-width="1"/></g><ellipse cx="1333.0" cy="477.0" rx="16" ry="24" transform="rotate(12 1333.0 477.0)" fill="none" stroke="#111" stroke-width="1"/><clipPath id="hc2"><ellipse cx="1431.0" cy="685.0" rx="22" ry="17" transform="rotate(30 1431.0 685.0)" fill="#000" /></clipPath><ellipse cx="1431" cy="685" rx="22" ry="17" transform="rotate(30 1431 685)" fill="url(#gHole)"/><g clip-path="url(#hc2)"><ellipse cx="1444.0" cy="679.0" rx="22" ry="17" transform="rotate(30 1444.0 679.0)" fill="#ffffff" stroke="#111" stroke-width="1"/></g><ellipse cx="1431.0" cy="685.0" rx="22" ry="17" transform="rotate(30 1431.0 685.0)" fill="none" stroke="#111" stroke-width="1"/><circle cx="1397" cy="508" r="3.2" fill="#e8c11a" stroke="#333" stroke-width="0.8"/><circle cx="1420" cy="545" r="3.2" fill="#e8c11a" stroke="#333" stroke-width="0.8"/><circle cx="1434" cy="587" r="3.2" fill="#e8c11a" stroke="#333" stroke-width="0.8"/><ellipse cx="1300.0" cy="612.0" rx="98" ry="114" transform="rotate(-17 1300.0 612.0)" fill="url(#gBody)" /><ellipse cx="1292.9" cy="616.4" rx="98" ry="114" transform="rotate(-17 1292.9 616.4)" fill="url(#gBody)" /><ellipse cx="1285.9" cy="620.8" rx="98" ry="114" transform="rotate(-17 1285.9 620.8)" fill="url(#gBody)" /><ellipse cx="1278.8" cy="625.1" rx="98" ry="114" transform="rotate(-17 1278.8 625.1)" fill="url(#gBody)" /><ellipse cx="1271.8" cy="629.5" rx="98" ry="114" transform="rotate(-17 1271.8 629.5)" fill="url(#gBody)" /><ellipse cx="1264.7" cy="633.9" rx="98" ry="114" transform="rotate(-17 1264.7 633.9)" fill="url(#gBody)" /><ellipse cx="1257.6" cy="638.2" rx="98" ry="114" transform="rotate(-17 1257.6 638.2)" fill="url(#gBody)" /><ellipse cx="1250.6" cy="642.6" rx="98" ry="114" transform="rotate(-17 1250.6 642.6)" fill="url(#gBody)" /><path d="M1250.9 509.6 L1259.0 505.7 L1267.5 502.7 L1276.2 500.7 L1285.2 499.5 L1294.2 499.3 L1303.3 500.1 L1312.4 501.8 L1321.4 504.4 L1330.2 507.9 L1338.7 512.3 L1347.0 517.5 L1354.8 523.5 L1362.2 530.3 L1369.0 537.7 L1375.3 545.8 L1380.9 554.4 L1385.9 563.5 L1390.1 573.0 L1393.6 582.9 L1396.3 593.0 L1398.2 603.2 L1399.2 613.5 L1399.4 623.8 L1398.8 634.0 L1397.4 644.1 L1395.2 653.8 L1392.1 663.2 L1388.3 672.2 L1383.7 680.7 L1378.5 688.6 L1372.5 695.8 L1366.0 702.3 L1358.9 708.1 L1351.3 713.1 L1343.3 717.3 L1335.0 720.5 L1326.3 722.8 L1317.4 724.3 L1308.4 724.7 L1299.3 724.2" fill="none" stroke="#111" stroke-width="1"/><path d="M1252 516 L1269 506 L1366 557 L1349 568 Z" fill="#7e8963" stroke="#111" stroke-width="1"/><path d="M1375 619 L1392 609 L1396 640 L1366 704 Z" fill="#6e7854" stroke="#111" stroke-width="1"/><ellipse cx="1252.5" cy="641.4" rx="98" ry="112" transform="rotate(-17 1252.5 641.4)" fill="#7d8862" stroke="#111" stroke-width="1"/><ellipse cx="1248.0" cy="644.2" rx="96" ry="110" transform="rotate(-17 1248.0 644.2)" fill="url(#gThr)" stroke="#111" stroke-width="1"/><ellipse cx="1239.0" cy="649.8" rx="96" ry="109" transform="rotate(-17 1239.0 649.8)" fill="url(#gThr)" stroke="#111" stroke-width="0.9"/><path d="M1165.6 580.4 L1167.2 578.1 L1168.8 575.9 L1170.5 573.8 L1172.3 571.7 L1174.1 569.7 L1176.0 567.7 L1177.9 565.8 L1179.9 564.0 L1182.0 562.2 L1184.0 560.6 L1186.2 558.9 L1188.3 557.4 L1190.6 555.9 L1192.8 554.5 L1195.1 553.2 L1197.5 551.9 L1199.8 550.8 L1202.2 549.7 L1204.7 548.7 L1207.1 547.7 L1209.6 546.9 L1212.2 546.1 L1214.7 545.4 L1217.3 544.8 L1219.9 544.3 L1222.5 543.8 L1225.1 543.5 L1227.7 543.2 L1230.4 543.0 L1233.0 542.9 L1235.7 542.9 L1238.3 542.9 L1241.0 543.1 L1243.7 543.3 L1246.4 543.6 L1249.0 544.0 L1251.7 544.5 L1254.3 545.0 L1257.0 545.7 L1259.6 546.4" fill="none" stroke="#a9b48b" stroke-width="2.5" stroke-linecap="round"/><ellipse cx="1229.9" cy="655.4" rx="96" ry="109" transform="rotate(-17 1229.9 655.4)" fill="url(#gThr)" stroke="#111" stroke-width="0.9"/><path d="M1156.5 586.0 L1158.1 583.7 L1159.8 581.5 L1161.5 579.4 L1163.3 577.3 L1165.1 575.3 L1167.0 573.3 L1168.9 571.4 L1170.9 569.6 L1172.9 567.8 L1175.0 566.2 L1177.1 564.5 L1179.3 563.0 L1181.5 561.5 L1183.8 560.1 L1186.1 558.8 L1188.4 557.5 L1190.8 556.4 L1193.2 555.3 L1195.6 554.3 L1198.1 553.3 L1200.6 552.5 L1203.1 551.7 L1205.7 551.0 L1208.2 550.4 L1210.8 549.9 L1213.4 549.4 L1216.0 549.1 L1218.7 548.8 L1221.3 548.6 L1224.0 548.5 L1226.6 548.5 L1229.3 548.5 L1232.0 548.7 L1234.6 548.9 L1237.3 549.2 L1240.0 549.6 L1242.6 550.1 L1245.3 550.6 L1247.9 551.3 L1250.6 552.0" fill="none" stroke="#a9b48b" stroke-width="2.5" stroke-linecap="round"/><ellipse cx="1220.9" cy="661.0" rx="96" ry="109" transform="rotate(-17 1220.9 661.0)" fill="url(#gThr)" stroke="#111" stroke-width="0.9"/><path d="M1147.5 591.6 L1149.1 589.3 L1150.7 587.1 L1152.5 585.0 L1154.2 582.9 L1156.1 580.9 L1157.9 578.9 L1159.9 577.0 L1161.8 575.2 L1163.9 573.4 L1166.0 571.8 L1168.1 570.1 L1170.3 568.6 L1172.5 567.1 L1174.7 565.7 L1177.0 564.4 L1179.4 563.1 L1181.7 562.0 L1184.2 560.9 L1186.6 559.9 L1189.1 558.9 L1191.6 558.1 L1194.1 557.3 L1196.6 556.6 L1199.2 556.0 L1201.8 555.5 L1204.4 555.0 L1207.0 554.7 L1209.6 554.4 L1212.3 554.2 L1214.9 554.1 L1217.6 554.1 L1220.3 554.1 L1222.9 554.3 L1225.6 554.5 L1228.3 554.8 L1230.9 555.2 L1233.6 555.7 L1236.3 556.2 L1238.9 556.9 L1241.5 557.6" fill="none" stroke="#a9b48b" stroke-width="2.5" stroke-linecap="round"/><ellipse cx="1211.9" cy="666.6" rx="96" ry="109" transform="rotate(-17 1211.9 666.6)" fill="url(#gThr)" stroke="#111" stroke-width="0.9"/><path d="M1138.5 597.2 L1140.1 594.9 L1141.7 592.7 L1143.4 590.6 L1145.2 588.5 L1147.0 586.5 L1148.9 584.5 L1150.8 582.6 L1152.8 580.8 L1154.8 579.0 L1156.9 577.4 L1159.1 575.7 L1161.2 574.2 L1163.4 572.7 L1165.7 571.3 L1168.0 570.0 L1170.3 568.7 L1172.7 567.6 L1175.1 566.5 L1177.6 565.5 L1180.0 564.5 L1182.5 563.7 L1185.0 562.9 L1187.6 562.2 L1190.1 561.6 L1192.7 561.1 L1195.3 560.6 L1198.0 560.3 L1200.6 560.0 L1203.2 559.8 L1205.9 559.7 L1208.6 559.7 L1211.2 559.7 L1213.9 559.9 L1216.6 560.1 L1219.2 560.4 L1221.9 560.8 L1224.6 561.3 L1227.2 561.8 L1229.9 562.5 L1232.5 563.2" fill="none" stroke="#a9b48b" stroke-width="2.5" stroke-linecap="round"/><ellipse cx="1202.8" cy="672.2" rx="96" ry="109" transform="rotate(-17 1202.8 672.2)" fill="url(#gThr)" stroke="#111" stroke-width="0.9"/><path d="M1129.4 602.8 L1131.0 600.5 L1132.7 598.3 L1134.4 596.2 L1136.1 594.1 L1138.0 592.1 L1139.9 590.1 L1141.8 588.2 L1143.8 586.4 L1145.8 584.6 L1147.9 583.0 L1150.0 581.3 L1152.2 579.8 L1154.4 578.3 L1156.7 576.9 L1159.0 575.6 L1161.3 574.3 L1163.7 573.2 L1166.1 572.1 L1168.5 571.1 L1171.0 570.1 L1173.5 569.3 L1176.0 568.5 L1178.5 567.8 L1181.1 567.2 L1183.7 566.7 L1186.3 566.2 L1188.9 565.9 L1191.6 565.6 L1194.2 565.4 L1196.9 565.3 L1199.5 565.3 L1202.2 565.3 L1204.9 565.5 L1207.5 565.7 L1210.2 566.0 L1212.9 566.4 L1215.5 566.9 L1218.2 567.4 L1220.8 568.1 L1223.4 568.8" fill="none" stroke="#a9b48b" stroke-width="2.5" stroke-linecap="round"/><ellipse cx="1194.9" cy="677.1" rx="96" ry="109" transform="rotate(-17 1194.9 677.1)" fill="url(#gThr)" stroke="#111" stroke-width="0.9"/><path d="M1121.5 607.7 L1123.1 605.4 L1124.8 603.2 L1126.5 601.1 L1128.2 599.0 L1130.1 597.0 L1131.9 595.0 L1133.9 593.1 L1135.9 591.3 L1137.9 589.5 L1140.0 587.9 L1142.1 586.2 L1144.3 584.7 L1146.5 583.2 L1148.8 581.8 L1151.1 580.5 L1153.4 579.2 L1155.8 578.1 L1158.2 577.0 L1160.6 576.0 L1163.1 575.0 L1165.6 574.2 L1168.1 573.4 L1170.6 572.7 L1173.2 572.1 L1175.8 571.6 L1178.4 571.1 L1181.0 570.8 L1183.6 570.5 L1186.3 570.3 L1188.9 570.2 L1191.6 570.2 L1194.3 570.2 L1196.9 570.4 L1199.6 570.6 L1202.3 570.9 L1205.0 571.3 L1207.6 571.8 L1210.3 572.3 L1212.9 573.0 L1215.5 573.7" fill="none" stroke="#a9b48b" stroke-width="2.5" stroke-linecap="round"/><ellipse cx="1187.0" cy="682.0" rx="94" ry="107" transform="rotate(-17 1187.0 682.0)" fill="#6f7a55" stroke="#111" stroke-width="1"/><path d="M1129.7 751.1 L1125.7 746.7 L1122.0 742.0 L1118.4 737.2 L1115.2 732.1 L1112.2 726.8 L1109.5 721.4 L1107.0 715.8 L1104.9 710.1 L1103.1 704.2 L1101.6 698.3 L1100.4 692.3 L1099.6 686.3 L1099.1 680.2 L1098.9 674.2 L1099.1 668.2 L1099.5 662.2 L1100.4 656.3 L1101.5 650.5 L1103.0 644.8 L1104.7 639.2 L1106.8 633.8 L1109.2 628.6 L1111.9 623.6 L1114.9 618.8 L1118.1 614.2 L1121.6 609.8 L1125.4 605.8 L1129.4 602.0 L1133.6 598.5 L1138.0 595.3 L1142.6 592.4 L1147.3 589.9 L1152.3 587.7 L1157.3 585.8 L1162.5 584.3 L1167.7 583.2 L1173.1 582.4 L1178.4 582.0 L1183.9 582.0 L1189.3 582.3" fill="none" stroke="#a9b589" stroke-width="1.6"/><ellipse cx="1188.0" cy="681.0" rx="87" ry="98" transform="rotate(-17 1188.0 681.0)" fill="#65704d" stroke="#111" stroke-width="1"/><ellipse cx="1190.0" cy="683.0" rx="82" ry="93" transform="rotate(-17 1190.0 683.0)" fill="url(#gIn)" stroke="#111" stroke-width="1"/><path d="M1178 588 L1192 585 L1196 602 L1182 606 Z" fill="#56603f" stroke="#111" stroke-width="1"/><path d="M1225 768 L1238 764 L1244 778 L1230 782 Z" fill="#56603f" stroke="#111" stroke-width="1"/><clipPath id="cOpen"><ellipse cx="1190.0" cy="683.0" rx="82" ry="93" transform="rotate(-17 1190.0 683.0)" fill="#000" /></clipPath><g clip-path="url(#cOpen)"><path d="M1176 585 C1172 620 1180 660 1210 695 C1230 715 1255 725 1280 728 L1300 600 Z" fill="url(#gPink)" stroke="#111" stroke-width="1"/><path d="M1196 600 C1196 630 1206 662 1228 688 C1240 702 1258 712 1275 716" fill="none" stroke="#7a4a3c" stroke-width="1"/><path d="M1098 700 L1196 652 L1198 686 L1116 730 Z" fill="#4f573c" stroke="#111" stroke-width="1"/><path d="M1116 730 L1198 686 L1200 690 L1120 735 Z" fill="#6d7753" stroke="#111" stroke-width="1"/></g><path d="M1197 593 L1221 610 C1245 630 1262 660 1270 690 L1273 715 L1290 722 C1296 660 1262 600 1205 585 Z" fill="#66714d" stroke="#111" stroke-width="1"/><path d="M1206 600 C1235 615 1262 650 1272 700" fill="none" stroke="#8f9a72" stroke-width="1.2"/><ellipse cx="1232" cy="617" rx="6" ry="7" transform="rotate(-30 1232 617)" fill="#b87262" stroke="#111" stroke-width="1"/><ellipse cx="1228" cy="651" rx="6" ry="7" transform="rotate(-30 1228 651)" fill="#b87262" stroke="#111" stroke-width="1"/><ellipse cx="1251" cy="678" rx="6" ry="7" transform="rotate(-30 1251 678)" fill="#b87262" stroke="#111" stroke-width="1"/><path d="M1230 618 L1203 631" stroke="#2a2a10" stroke-width="9" stroke-linecap="round"/><path d="M1230 618 L1203 631" stroke="#f2c80f" stroke-width="7" stroke-linecap="round"/><path d="M1228 616 L1204 629" stroke="#fae36a" stroke-width="1.5" stroke-linecap="round"/><path d="M1226 652 L1206 663" stroke="#2a2a10" stroke-width="9" stroke-linecap="round"/><path d="M1226 652 L1206 663" stroke="#f2c80f" stroke-width="7" stroke-linecap="round"/><path d="M1224 650 L1207 661" stroke="#fae36a" stroke-width="1.5" stroke-linecap="round"/><path d="M1249 679 L1230 690" stroke="#2a2a10" stroke-width="9" stroke-linecap="round"/><path d="M1249 679 L1230 690" stroke="#f2c80f" stroke-width="7" stroke-linecap="round"/><path d="M1247 677 L1231 688" stroke="#fae36a" stroke-width="1.5" stroke-linecap="round"/><circle cx="1252" cy="663" r="4" fill="#f0c612" stroke="#333" stroke-width="0.8"/><circle cx="1259" cy="697" r="4" fill="#f0c612" stroke="#333" stroke-width="0.8"/><circle cx="1240" cy="628" r="4" fill="#f0c612" stroke="#333" stroke-width="0.8"/></svg>
<svg style="position:absolute;left:0;top:0" width="1914" height="1026" viewBox="0 0 1914 1026"><defs><radialGradient id="gBall" cx="0.45" cy="0.4" r="0.6"><stop offset="0" stop-color="#fbf9c8"/><stop offset="1" stop-color="#ece56e"/></radialGradient></defs><path d="M916 950 L898 905" stroke="#f39b9b" stroke-width="4.5"/><path d="M887 890 L900 902 L891 906 Z" fill="#f39b9b" stroke="#f39b9b" stroke-width="2"/><path d="M914 953 L882 963 L866 972 L890 969 Z" fill="#80c480"/><path d="M914 955 L892 966 L882 974 L895 973 Z" fill="#79a8f2"/><path d="M914 953 L892 965" stroke="#4a7fae" stroke-width="2"/><circle cx="881" cy="966" r="2.2" fill="#2a9a2a"/><circle cx="890" cy="968" r="2" fill="#4f86e8"/><circle cx="917" cy="952" r="8.5" fill="url(#gBall)"/><path d="M879 876 L889 887 M889 876 L879 887 M877.5 876 H881 M887 876 H890.5 M877.5 887 H881 M887 887 H890.5" stroke="#f06a6a" stroke-width="1.1" fill="none"/><path d="M854 969 L859 975 L864 969 M859 975 V981 M852.5 969 H856 M862 969 H865.5 M857 981 H861" stroke="#6cc46c" stroke-width="1.1" fill="none"/><path d="M870 974 H878 L870 983 H878" stroke="#5a8ef0" stroke-width="1.2" fill="none"/></svg>
</body></html>
